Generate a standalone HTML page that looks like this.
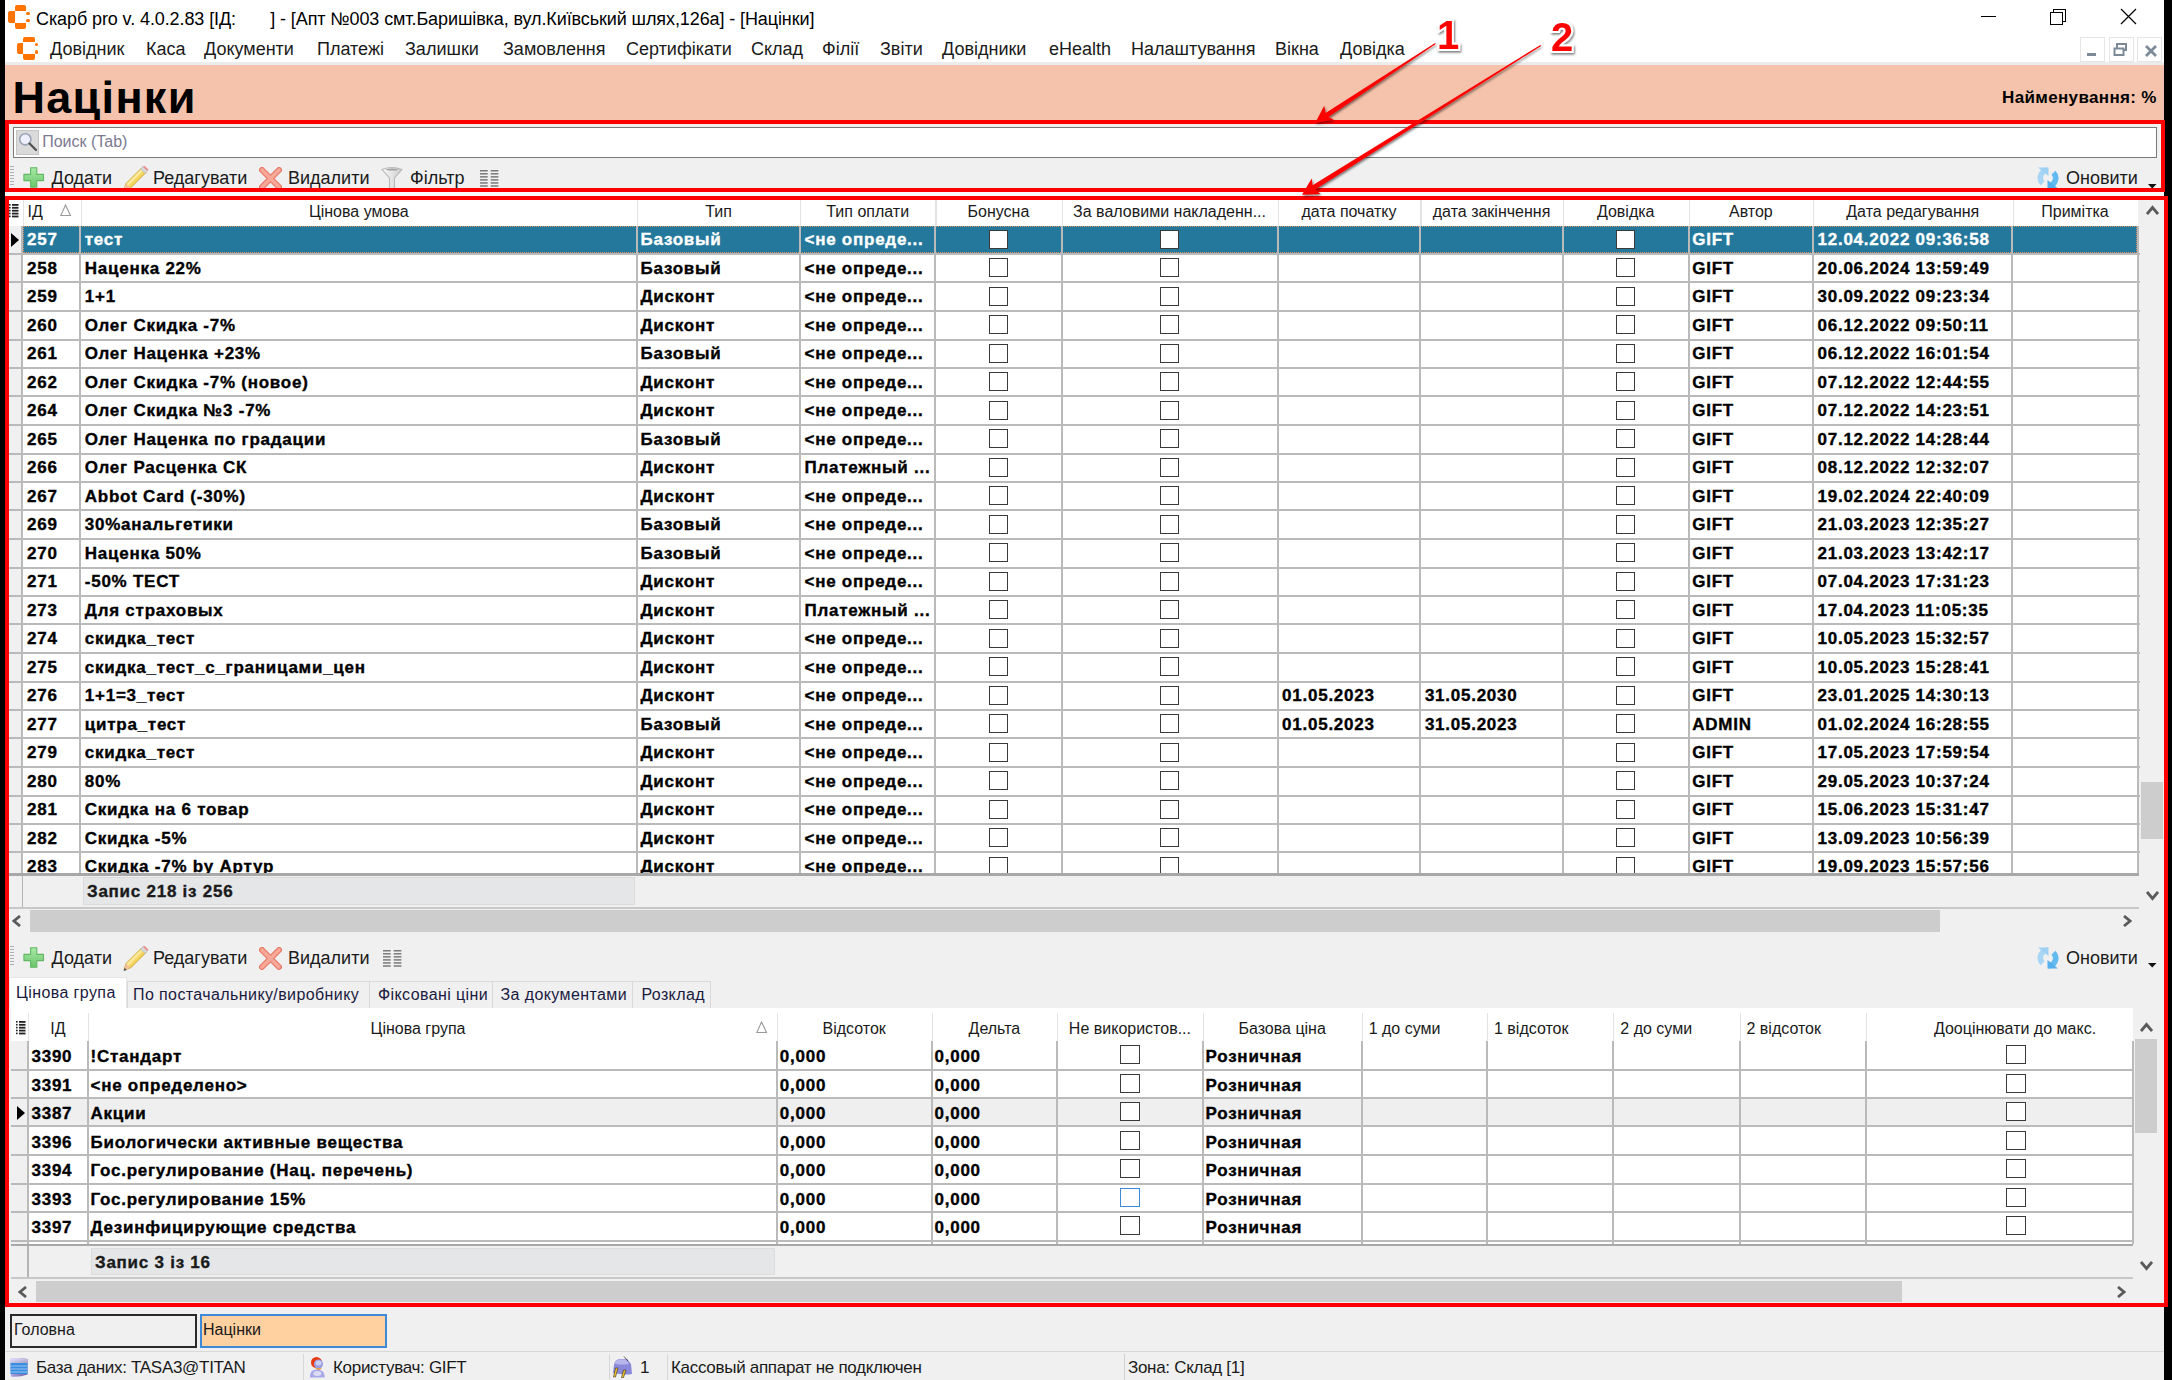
<!DOCTYPE html><html><head><meta charset="utf-8"><style>
html,body{margin:0;padding:0;width:2172px;height:1380px;overflow:hidden;background:#f0f0f0;}
body{position:relative;font-family:"Liberation Sans", sans-serif;}
.t{position:absolute;white-space:nowrap;}
</style></head><body>
<div style="position:absolute;left:0px;top:0px;width:2172px;height:62px;background:#fff"></div>
<div style="position:absolute;left:5px;top:62px;width:2159px;height:3px;background:#ececec"></div>
<div style="position:absolute;left:14.7px;top:5.1px;width:11.4px;height:5.7px;background:#ff7300;border-radius:2px 2px 0 0"></div>
<div style="position:absolute;left:8.4px;top:11.0px;width:6.2px;height:11.7px;background:#ff7300;border-radius:2px 0 0 2px"></div>
<div style="position:absolute;left:14.7px;top:22.9px;width:11.4px;height:5.8px;background:#ff7300;border-radius:0 0 2px 2px"></div>
<div style="position:absolute;left:26.200000000000003px;top:11.5px;width:3.4px;height:3.4px;background:#ff7300;border-radius:50%"></div>
<div style="position:absolute;left:26.200000000000003px;top:18.7px;width:3.4px;height:3.4px;background:#ff7300;border-radius:50%"></div>
<div class="t" style="left:36px;top:9.41px;font-size:18px;line-height:20.70px;height:20.70px;font-weight:normal;color:#000;letter-spacing:-0.1px">Скарб pro v. 4.0.2.83 [ІД:&nbsp;&nbsp;&nbsp;&nbsp;&nbsp;&nbsp;&nbsp;] - [Апт №003 смт.Баришівка, вул.Київський шлях,126а] - [Націнки]</div>
<div style="position:absolute;left:1981px;top:16px;width:15px;height:1.2px;background:#000"></div>
<div style="position:absolute;left:2053px;top:9px;width:11px;height:11px;border:1.2px solid #000;background:#fff"></div>
<div style="position:absolute;left:2050px;top:12px;width:11px;height:11px;border:1.2px solid #000;background:#fff"></div>
<svg style="position:absolute;left:2120px;top:8px" width="18" height="18"><path d="M1 1 L16 16 M16 1 L1 16" stroke="#000" stroke-width="1.2"/></svg>
<div style="position:absolute;left:23.2px;top:36.6px;width:11.4px;height:5.7px;background:#ff7300;border-radius:2px 2px 0 0"></div>
<div style="position:absolute;left:16.9px;top:42.5px;width:6.2px;height:11.7px;background:#ff7300;border-radius:2px 0 0 2px"></div>
<div style="position:absolute;left:23.2px;top:54.400000000000006px;width:11.4px;height:5.8px;background:#ff7300;border-radius:0 0 2px 2px"></div>
<div style="position:absolute;left:34.7px;top:43.0px;width:3.4px;height:3.4px;background:#ff7300;border-radius:50%"></div>
<div style="position:absolute;left:34.7px;top:50.2px;width:3.4px;height:3.4px;background:#ff7300;border-radius:50%"></div>
<div class="t" style="left:50px;top:39.41px;font-size:18px;line-height:20.70px;height:20.70px;font-weight:normal;color:#1a1a1a;">Довідник</div>
<div class="t" style="left:146px;top:39.41px;font-size:18px;line-height:20.70px;height:20.70px;font-weight:normal;color:#1a1a1a;">Каса</div>
<div class="t" style="left:204px;top:39.41px;font-size:18px;line-height:20.70px;height:20.70px;font-weight:normal;color:#1a1a1a;">Документи</div>
<div class="t" style="left:317px;top:39.41px;font-size:18px;line-height:20.70px;height:20.70px;font-weight:normal;color:#1a1a1a;">Платежі</div>
<div class="t" style="left:405px;top:39.41px;font-size:18px;line-height:20.70px;height:20.70px;font-weight:normal;color:#1a1a1a;">Залишки</div>
<div class="t" style="left:503px;top:39.41px;font-size:18px;line-height:20.70px;height:20.70px;font-weight:normal;color:#1a1a1a;">Замовлення</div>
<div class="t" style="left:626px;top:39.41px;font-size:18px;line-height:20.70px;height:20.70px;font-weight:normal;color:#1a1a1a;">Сертифікати</div>
<div class="t" style="left:751px;top:39.41px;font-size:18px;line-height:20.70px;height:20.70px;font-weight:normal;color:#1a1a1a;">Склад</div>
<div class="t" style="left:822px;top:39.41px;font-size:18px;line-height:20.70px;height:20.70px;font-weight:normal;color:#1a1a1a;">Філії</div>
<div class="t" style="left:880px;top:39.41px;font-size:18px;line-height:20.70px;height:20.70px;font-weight:normal;color:#1a1a1a;">Звіти</div>
<div class="t" style="left:942px;top:39.41px;font-size:18px;line-height:20.70px;height:20.70px;font-weight:normal;color:#1a1a1a;">Довідники</div>
<div class="t" style="left:1049px;top:39.41px;font-size:18px;line-height:20.70px;height:20.70px;font-weight:normal;color:#1a1a1a;">eHealth</div>
<div class="t" style="left:1131px;top:39.41px;font-size:18px;line-height:20.70px;height:20.70px;font-weight:normal;color:#1a1a1a;">Налаштування</div>
<div class="t" style="left:1275px;top:39.41px;font-size:18px;line-height:20.70px;height:20.70px;font-weight:normal;color:#1a1a1a;">Вікна</div>
<div class="t" style="left:1340px;top:39.41px;font-size:18px;line-height:20.70px;height:20.70px;font-weight:normal;color:#1a1a1a;">Довідка</div>
<div style="position:absolute;left:2080px;top:37px;width:25px;height:25px;border:1px solid #e6e6e6;box-sizing:border-box;background:#fff"></div>
<div style="position:absolute;left:2108.5px;top:37px;width:25px;height:25px;border:1px solid #e6e6e6;box-sizing:border-box;background:#fff"></div>
<div style="position:absolute;left:2137px;top:37px;width:25px;height:25px;border:1px solid #e6e6e6;box-sizing:border-box;background:#fff"></div>
<div style="position:absolute;left:2087px;top:52.5px;width:9px;height:3.5px;background:#7c8a98"></div>
<svg style="position:absolute;left:2113px;top:43px" width="16" height="14"><rect x="4" y="1" width="9" height="6" fill="none" stroke="#7c8a98" stroke-width="2"/><rect x="1.5" y="5.5" width="9" height="6.5" fill="#fff" stroke="#7c8a98" stroke-width="2"/></svg>
<svg style="position:absolute;left:2144px;top:44px" width="14" height="14"><path d="M2 2 L12 12 M12 2 L2 12" stroke="#7c8a98" stroke-width="2.8"/></svg>
<div style="position:absolute;left:5px;top:65px;width:2159px;height:55.5px;background:#f5c3ab"></div>
<div class="t" style="left:12.5px;top:71.53px;font-size:45px;line-height:51.75px;height:51.75px;font-weight:bold;color:#000;letter-spacing:1.3px">Націнки</div>
<div class="t" style="left:2002px;top:88.33px;font-size:17px;line-height:19.55px;height:19.55px;font-weight:bold;color:#000;letter-spacing:0.35px">Найменування: %</div>
<div style="position:absolute;left:5px;top:120px;width:2160px;height:72px;background:#f0f0f0"></div>
<div style="position:absolute;left:12.9px;top:127px;width:2144px;height:30.5px;background:#fff;border:1px solid #7a7a7a;box-sizing:border-box"></div>
<div style="position:absolute;left:15.8px;top:130px;width:23.2px;height:24.6px;background:#dadada;border:1px solid #c4c4c4;box-sizing:border-box"></div>
<svg style="position:absolute;left:16px;top:131px" width="24" height="24"><circle cx="9.3" cy="8.3" r="5.6" fill="#eef0ff" stroke="#9aa4b8" stroke-width="1.6"/><path d="M13.5 12.5 L20 19" stroke="#555" stroke-width="2.4" stroke-linecap="round"/></svg>
<div class="t" style="left:42.2px;top:132.76px;font-size:16px;line-height:18.40px;height:18.40px;font-weight:normal;color:#7a7a90;">Поиск (Tab)</div>
<div style="position:absolute;left:10px;top:166px;width:4px;height:1px;background:#b0b0b0"></div>
<div style="position:absolute;left:10px;top:169px;width:4px;height:1px;background:#b0b0b0"></div>
<div style="position:absolute;left:10px;top:172px;width:4px;height:1px;background:#b0b0b0"></div>
<div style="position:absolute;left:10px;top:175px;width:4px;height:1px;background:#b0b0b0"></div>
<div style="position:absolute;left:10px;top:178px;width:4px;height:1px;background:#b0b0b0"></div>
<div style="position:absolute;left:10px;top:181px;width:4px;height:1px;background:#b0b0b0"></div>
<div style="position:absolute;left:10px;top:184px;width:4px;height:1px;background:#b0b0b0"></div>
<svg style="position:absolute;left:22.8px;top:167.3px" width="22" height="22"><defs><linearGradient id="pg" x1="0" y1="0" x2="0" y2="1"><stop offset="0" stop-color="#a8eaa8"/><stop offset="1" stop-color="#6cc46c"/></linearGradient></defs><path d="M7.6 0.7 H13.8 V7.4 H20.5 V13.6 H13.8 V20.3 H7.6 V13.6 H0.9 V7.4 H7.6 Z" fill="url(#pg)" stroke="#62b862" stroke-width="1.1" stroke-linejoin="round"/></svg>
<div class="t" style="left:51.6px;top:168.41px;font-size:18px;line-height:20.70px;height:20.70px;font-weight:normal;color:#1a1a1a;">Додати</div>
<svg style="position:absolute;left:122.5px;top:165.5px" width="26" height="26"><path d="M1 24 L3 17.5 L18.5 2 L23 6.5 L7.5 22 Z" fill="#f4d45a" stroke="#c8a030" stroke-width="0.9"/><path d="M3.2 18 L18.2 3 L20.2 5 L5.2 20 Z" fill="#fbe89a"/><path d="M17.5 3 L20 0.6 L24.4 5 L22 7.5 Z" fill="#d8d8d8" stroke="#b0b0b0" stroke-width="0.6"/><path d="M20 0.6 L21.3 -0.5 L25.5 3.7 L24.4 5 Z" fill="#f08a8a"/><path d="M1 24 L3 17.5 L7.5 22 Z" fill="#f2c09a"/><path d="M0.6 25 L1.6 21.8 L3.8 24 Z" fill="#555"/></svg>
<div class="t" style="left:153px;top:168.41px;font-size:18px;line-height:20.70px;height:20.70px;font-weight:normal;color:#1a1a1a;">Редагувати</div>
<svg style="position:absolute;left:259px;top:167px" width="23" height="23"><path d="M3 3 L20 20 M20 3 L3 20" stroke="#e87a68" stroke-width="6" stroke-linecap="round"/><path d="M3 3 L20 20 M20 3 L3 20" stroke="#f7a898" stroke-width="3.6" stroke-linecap="round"/></svg>
<div class="t" style="left:288px;top:168.41px;font-size:18px;line-height:20.70px;height:20.70px;font-weight:normal;color:#1a1a1a;">Видалити</div>
<svg style="position:absolute;left:381.3px;top:165.8px" width="22" height="24"><defs><linearGradient id="fg" x1="0" y1="0" x2="1" y2="0"><stop offset="0" stop-color="#f8f8f8"/><stop offset="0.5" stop-color="#e4e4e4"/><stop offset="1" stop-color="#c8c8c8"/></linearGradient></defs><path d="M1 3.5 Q11 -0.5 21 3.5 L13.5 12 V23 H8.5 V12 Z" fill="url(#fg)" stroke="#b8b8b8" stroke-width="1.1"/><ellipse cx="11" cy="3.6" rx="6" ry="1" fill="#a0a0a0"/></svg>
<div class="t" style="left:410px;top:168.41px;font-size:18px;line-height:20.70px;height:20.70px;font-weight:normal;color:#1a1a1a;">Фільтр</div>
<svg style="position:absolute;left:480.3px;top:170px" width="19" height="18"><rect x="0" y="0.0" width="7.7" height="1.5" fill="#7a7a7a"/><rect x="0" y="3.05" width="7.7" height="1.5" fill="#7a7a7a"/><rect x="0" y="6.1" width="7.7" height="1.5" fill="#7a7a7a"/><rect x="0" y="9.149999999999999" width="7.7" height="1.5" fill="#7a7a7a"/><rect x="0" y="12.2" width="7.7" height="1.5" fill="#7a7a7a"/><rect x="0" y="15.25" width="7.7" height="1.5" fill="#7a7a7a"/><rect x="10.7" y="0.0" width="7.7" height="1.5" fill="#7a7a7a"/><rect x="10.7" y="3.05" width="7.7" height="1.5" fill="#7a7a7a"/><rect x="10.7" y="6.1" width="7.7" height="1.5" fill="#7a7a7a"/><rect x="10.7" y="9.149999999999999" width="7.7" height="1.5" fill="#7a7a7a"/><rect x="10.7" y="12.2" width="7.7" height="1.5" fill="#7a7a7a"/><rect x="10.7" y="15.25" width="7.7" height="1.5" fill="#7a7a7a"/></svg>
<svg style="position:absolute;left:2037px;top:167px" width="23" height="23"><path d="M11 3.2 A7.6 7.6 0 0 0 5.6 16.2" fill="none" stroke="#a9d6f5" stroke-width="5.6"/><path d="M1 0.5 H11.5 V9 Z" fill="#9fd0f3"/><path d="M11 18.8 A7.6 7.6 0 0 0 16.4 5.8" fill="none" stroke="#62baf0" stroke-width="5.6"/><path d="M21 21.5 H10.5 V13 Z" fill="#55b0ec"/></svg>
<div class="t" style="left:2066px;top:168.41px;font-size:18px;line-height:20.70px;height:20.70px;font-weight:normal;color:#1a1a1a;">Оновити</div>
<svg style="position:absolute;left:2148px;top:183.5px" width="10" height="6"><path d="M0 0 H8.5 L4.25 4.5 Z" fill="#111"/></svg>
<div style="position:absolute;left:5px;top:120px;width:2160px;height:72px;border:4px solid #ff0000;box-sizing:border-box"></div>
<div style="position:absolute;left:5px;top:192px;width:2159px;height:4px;background:#fafafa"></div>
<div style="position:absolute;left:9px;top:200px;width:2155px;height:1106px;background:#f0f0f0"></div>
<div style="position:absolute;left:9px;top:200px;width:2128.5px;height:25.5px;background:#fff"></div>
<div style="position:absolute;left:22.5px;top:225.5px;width:2115.0px;height:647.5px;background:#fff"></div>
<div style="position:absolute;left:9px;top:225.5px;width:13.5px;height:647.5px;background:#f0f0f0"></div>
<div style="position:absolute;left:22.5px;top:225.5px;width:2115.0px;height:28.5px;background:#24789c"></div>
<div style="position:absolute;left:22.5px;top:225.5px;width:2114.0px;height:27.5px;border:1px dotted #d89060;box-sizing:border-box"></div>
<div style="position:absolute;left:22.5px;top:200px;width:1.2px;height:25.5px;background:#e3e3e3"></div>
<div style="position:absolute;left:80.5px;top:200px;width:1.2px;height:25.5px;background:#e3e3e3"></div>
<div style="position:absolute;left:637px;top:200px;width:1.2px;height:25.5px;background:#e3e3e3"></div>
<div style="position:absolute;left:800px;top:200px;width:1.2px;height:25.5px;background:#e3e3e3"></div>
<div style="position:absolute;left:935.4px;top:200px;width:1.2px;height:25.5px;background:#e3e3e3"></div>
<div style="position:absolute;left:1061.5px;top:200px;width:1.2px;height:25.5px;background:#e3e3e3"></div>
<div style="position:absolute;left:1277.6px;top:200px;width:1.2px;height:25.5px;background:#e3e3e3"></div>
<div style="position:absolute;left:1420.4px;top:200px;width:1.2px;height:25.5px;background:#e3e3e3"></div>
<div style="position:absolute;left:1562.7px;top:200px;width:1.2px;height:25.5px;background:#e3e3e3"></div>
<div style="position:absolute;left:1688.7px;top:200px;width:1.2px;height:25.5px;background:#e3e3e3"></div>
<div style="position:absolute;left:1813px;top:200px;width:1.2px;height:25.5px;background:#e3e3e3"></div>
<div style="position:absolute;left:2012.5px;top:200px;width:1.2px;height:25.5px;background:#e3e3e3"></div>
<div class="t" style="left:27.6px;top:202.96px;font-size:16px;line-height:18.40px;height:18.40px;font-weight:normal;color:#1a1a1a;">ІД</div>
<div class="t" style="left:-41.25px;width:800px;text-align:center;top:202.96px;font-size:16px;line-height:18.40px;font-weight:normal;color:#1a1a1a;">Цінова умова</div>
<div class="t" style="left:318.5px;width:800px;text-align:center;top:202.96px;font-size:16px;line-height:18.40px;font-weight:normal;color:#1a1a1a;">Тип</div>
<div class="t" style="left:467.70000000000005px;width:800px;text-align:center;top:202.96px;font-size:16px;line-height:18.40px;font-weight:normal;color:#1a1a1a;">Тип оплати</div>
<div class="t" style="left:598.45px;width:800px;text-align:center;top:202.96px;font-size:16px;line-height:18.40px;font-weight:normal;color:#1a1a1a;">Бонусна</div>
<div class="t" style="left:769.55px;width:800px;text-align:center;top:202.96px;font-size:16px;line-height:18.40px;font-weight:normal;color:#1a1a1a;">За валовими накладенн...</div>
<div class="t" style="left:949.0px;width:800px;text-align:center;top:202.96px;font-size:16px;line-height:18.40px;font-weight:normal;color:#1a1a1a;">дата початку</div>
<div class="t" style="left:1091.5500000000002px;width:800px;text-align:center;top:202.96px;font-size:16px;line-height:18.40px;font-weight:normal;color:#1a1a1a;">дата закінчення</div>
<div class="t" style="left:1225.7px;width:800px;text-align:center;top:202.96px;font-size:16px;line-height:18.40px;font-weight:normal;color:#1a1a1a;">Довідка</div>
<div class="t" style="left:1350.85px;width:800px;text-align:center;top:202.96px;font-size:16px;line-height:18.40px;font-weight:normal;color:#1a1a1a;">Автор</div>
<div class="t" style="left:1512.75px;width:800px;text-align:center;top:202.96px;font-size:16px;line-height:18.40px;font-weight:normal;color:#1a1a1a;">Дата редагування</div>
<div class="t" style="left:1675.0px;width:800px;text-align:center;top:202.96px;font-size:16px;line-height:18.40px;font-weight:normal;color:#1a1a1a;">Примітка</div>
<svg style="position:absolute;left:9.3px;top:204.3px" width="10" height="15"><rect x="0" y="0.0" width="1.6" height="1.6" fill="#222"/><rect x="3" y="0.0" width="6.5" height="1.8" fill="#222"/><rect x="0" y="2.9" width="1.6" height="1.6" fill="#222"/><rect x="3" y="2.9" width="6.5" height="1.8" fill="#222"/><rect x="0" y="5.8" width="1.6" height="1.6" fill="#222"/><rect x="3" y="5.8" width="6.5" height="1.8" fill="#222"/><rect x="0" y="8.7" width="1.6" height="1.6" fill="#222"/><rect x="3" y="8.7" width="6.5" height="1.8" fill="#222"/><rect x="0" y="11.6" width="1.6" height="1.6" fill="#222"/><rect x="3" y="11.6" width="6.5" height="1.8" fill="#222"/></svg>
<svg style="position:absolute;left:60px;top:204px" width="12" height="13"><path d="M5.5 1 L10.5 11.5 H0.8 Z" fill="#fff" stroke="#999" stroke-width="1.1"/></svg>
<div style="position:absolute;left:0;top:0;width:2172px;height:873px;overflow:hidden">
<div class="t" style="left:27.0px;top:230.33px;font-size:17px;line-height:19.55px;height:19.55px;font-weight:bold;color:#fff;letter-spacing:0.75px;-webkit-text-stroke:0.35px currentColor">257</div>
<div class="t" style="left:84.8px;top:230.33px;font-size:17px;line-height:19.55px;height:19.55px;font-weight:bold;color:#fff;letter-spacing:0.75px;-webkit-text-stroke:0.35px currentColor">тест</div>
<div class="t" style="left:640.5px;top:230.33px;font-size:17px;line-height:19.55px;height:19.55px;font-weight:bold;color:#fff;letter-spacing:0.75px;-webkit-text-stroke:0.35px currentColor">Базовый</div>
<div class="t" style="left:804.5px;top:230.33px;font-size:17px;line-height:19.55px;height:19.55px;font-weight:bold;color:#fff;letter-spacing:0.75px;-webkit-text-stroke:0.35px currentColor">&lt;не опреде...</div>
<div style="position:absolute;left:988.85px;top:229.79999999999998px;width:19.2px;height:19.2px;border:1.8px solid #3a3a3a;box-sizing:border-box;background:#fff"></div>
<div style="position:absolute;left:1159.95px;top:229.79999999999998px;width:19.2px;height:19.2px;border:1.8px solid #3a3a3a;box-sizing:border-box;background:#fff"></div>
<div style="position:absolute;left:1616.1000000000001px;top:229.79999999999998px;width:19.2px;height:19.2px;border:1.8px solid #3a3a3a;box-sizing:border-box;background:#fff"></div>
<div class="t" style="left:1692.2px;top:230.33px;font-size:17px;line-height:19.55px;height:19.55px;font-weight:bold;color:#fff;letter-spacing:0.75px;-webkit-text-stroke:0.35px currentColor">GIFT</div>
<div class="t" style="left:1817.5px;top:230.33px;font-size:17px;line-height:19.55px;height:19.55px;font-weight:bold;color:#fff;letter-spacing:0.75px;-webkit-text-stroke:0.35px currentColor">12.04.2022 09:36:58</div>
<div class="t" style="left:27.0px;top:258.83px;font-size:17px;line-height:19.55px;height:19.55px;font-weight:bold;color:#000;letter-spacing:0.75px;-webkit-text-stroke:0.35px currentColor">258</div>
<div class="t" style="left:84.8px;top:258.83px;font-size:17px;line-height:19.55px;height:19.55px;font-weight:bold;color:#000;letter-spacing:0.75px;-webkit-text-stroke:0.35px currentColor">Наценка 22%</div>
<div class="t" style="left:640.5px;top:258.83px;font-size:17px;line-height:19.55px;height:19.55px;font-weight:bold;color:#000;letter-spacing:0.75px;-webkit-text-stroke:0.35px currentColor">Базовый</div>
<div class="t" style="left:804.5px;top:258.83px;font-size:17px;line-height:19.55px;height:19.55px;font-weight:bold;color:#000;letter-spacing:0.75px;-webkit-text-stroke:0.35px currentColor">&lt;не опреде...</div>
<div style="position:absolute;left:988.85px;top:258.3px;width:19.2px;height:19.2px;border:1.8px solid #3a3a3a;box-sizing:border-box;background:#fff"></div>
<div style="position:absolute;left:1159.95px;top:258.3px;width:19.2px;height:19.2px;border:1.8px solid #3a3a3a;box-sizing:border-box;background:#fff"></div>
<div style="position:absolute;left:1616.1000000000001px;top:258.3px;width:19.2px;height:19.2px;border:1.8px solid #3a3a3a;box-sizing:border-box;background:#fff"></div>
<div class="t" style="left:1692.2px;top:258.83px;font-size:17px;line-height:19.55px;height:19.55px;font-weight:bold;color:#000;letter-spacing:0.75px;-webkit-text-stroke:0.35px currentColor">GIFT</div>
<div class="t" style="left:1817.5px;top:258.83px;font-size:17px;line-height:19.55px;height:19.55px;font-weight:bold;color:#000;letter-spacing:0.75px;-webkit-text-stroke:0.35px currentColor">20.06.2024 13:59:49</div>
<div style="position:absolute;left:9px;top:253px;width:2130.5px;height:2px;background:#bababa"></div>
<div class="t" style="left:27.0px;top:287.33px;font-size:17px;line-height:19.55px;height:19.55px;font-weight:bold;color:#000;letter-spacing:0.75px;-webkit-text-stroke:0.35px currentColor">259</div>
<div class="t" style="left:84.8px;top:287.33px;font-size:17px;line-height:19.55px;height:19.55px;font-weight:bold;color:#000;letter-spacing:0.75px;-webkit-text-stroke:0.35px currentColor">1+1</div>
<div class="t" style="left:640.5px;top:287.33px;font-size:17px;line-height:19.55px;height:19.55px;font-weight:bold;color:#000;letter-spacing:0.75px;-webkit-text-stroke:0.35px currentColor">Дисконт</div>
<div class="t" style="left:804.5px;top:287.33px;font-size:17px;line-height:19.55px;height:19.55px;font-weight:bold;color:#000;letter-spacing:0.75px;-webkit-text-stroke:0.35px currentColor">&lt;не опреде...</div>
<div style="position:absolute;left:988.85px;top:286.8px;width:19.2px;height:19.2px;border:1.8px solid #3a3a3a;box-sizing:border-box;background:#fff"></div>
<div style="position:absolute;left:1159.95px;top:286.8px;width:19.2px;height:19.2px;border:1.8px solid #3a3a3a;box-sizing:border-box;background:#fff"></div>
<div style="position:absolute;left:1616.1000000000001px;top:286.8px;width:19.2px;height:19.2px;border:1.8px solid #3a3a3a;box-sizing:border-box;background:#fff"></div>
<div class="t" style="left:1692.2px;top:287.33px;font-size:17px;line-height:19.55px;height:19.55px;font-weight:bold;color:#000;letter-spacing:0.75px;-webkit-text-stroke:0.35px currentColor">GIFT</div>
<div class="t" style="left:1817.5px;top:287.33px;font-size:17px;line-height:19.55px;height:19.55px;font-weight:bold;color:#000;letter-spacing:0.75px;-webkit-text-stroke:0.35px currentColor">30.09.2022 09:23:34</div>
<div style="position:absolute;left:9px;top:281px;width:2130.5px;height:2px;background:#bababa"></div>
<div class="t" style="left:27.0px;top:315.83px;font-size:17px;line-height:19.55px;height:19.55px;font-weight:bold;color:#000;letter-spacing:0.75px;-webkit-text-stroke:0.35px currentColor">260</div>
<div class="t" style="left:84.8px;top:315.83px;font-size:17px;line-height:19.55px;height:19.55px;font-weight:bold;color:#000;letter-spacing:0.75px;-webkit-text-stroke:0.35px currentColor">Олег Скидка -7%</div>
<div class="t" style="left:640.5px;top:315.83px;font-size:17px;line-height:19.55px;height:19.55px;font-weight:bold;color:#000;letter-spacing:0.75px;-webkit-text-stroke:0.35px currentColor">Дисконт</div>
<div class="t" style="left:804.5px;top:315.83px;font-size:17px;line-height:19.55px;height:19.55px;font-weight:bold;color:#000;letter-spacing:0.75px;-webkit-text-stroke:0.35px currentColor">&lt;не опреде...</div>
<div style="position:absolute;left:988.85px;top:315.3px;width:19.2px;height:19.2px;border:1.8px solid #3a3a3a;box-sizing:border-box;background:#fff"></div>
<div style="position:absolute;left:1159.95px;top:315.3px;width:19.2px;height:19.2px;border:1.8px solid #3a3a3a;box-sizing:border-box;background:#fff"></div>
<div style="position:absolute;left:1616.1000000000001px;top:315.3px;width:19.2px;height:19.2px;border:1.8px solid #3a3a3a;box-sizing:border-box;background:#fff"></div>
<div class="t" style="left:1692.2px;top:315.83px;font-size:17px;line-height:19.55px;height:19.55px;font-weight:bold;color:#000;letter-spacing:0.75px;-webkit-text-stroke:0.35px currentColor">GIFT</div>
<div class="t" style="left:1817.5px;top:315.83px;font-size:17px;line-height:19.55px;height:19.55px;font-weight:bold;color:#000;letter-spacing:0.75px;-webkit-text-stroke:0.35px currentColor">06.12.2022 09:50:11</div>
<div style="position:absolute;left:9px;top:310px;width:2130.5px;height:2px;background:#bababa"></div>
<div class="t" style="left:27.0px;top:344.33px;font-size:17px;line-height:19.55px;height:19.55px;font-weight:bold;color:#000;letter-spacing:0.75px;-webkit-text-stroke:0.35px currentColor">261</div>
<div class="t" style="left:84.8px;top:344.33px;font-size:17px;line-height:19.55px;height:19.55px;font-weight:bold;color:#000;letter-spacing:0.75px;-webkit-text-stroke:0.35px currentColor">Олег Наценка +23%</div>
<div class="t" style="left:640.5px;top:344.33px;font-size:17px;line-height:19.55px;height:19.55px;font-weight:bold;color:#000;letter-spacing:0.75px;-webkit-text-stroke:0.35px currentColor">Базовый</div>
<div class="t" style="left:804.5px;top:344.33px;font-size:17px;line-height:19.55px;height:19.55px;font-weight:bold;color:#000;letter-spacing:0.75px;-webkit-text-stroke:0.35px currentColor">&lt;не опреде...</div>
<div style="position:absolute;left:988.85px;top:343.8px;width:19.2px;height:19.2px;border:1.8px solid #3a3a3a;box-sizing:border-box;background:#fff"></div>
<div style="position:absolute;left:1159.95px;top:343.8px;width:19.2px;height:19.2px;border:1.8px solid #3a3a3a;box-sizing:border-box;background:#fff"></div>
<div style="position:absolute;left:1616.1000000000001px;top:343.8px;width:19.2px;height:19.2px;border:1.8px solid #3a3a3a;box-sizing:border-box;background:#fff"></div>
<div class="t" style="left:1692.2px;top:344.33px;font-size:17px;line-height:19.55px;height:19.55px;font-weight:bold;color:#000;letter-spacing:0.75px;-webkit-text-stroke:0.35px currentColor">GIFT</div>
<div class="t" style="left:1817.5px;top:344.33px;font-size:17px;line-height:19.55px;height:19.55px;font-weight:bold;color:#000;letter-spacing:0.75px;-webkit-text-stroke:0.35px currentColor">06.12.2022 16:01:54</div>
<div style="position:absolute;left:9px;top:339px;width:2130.5px;height:2px;background:#bababa"></div>
<div class="t" style="left:27.0px;top:372.83px;font-size:17px;line-height:19.55px;height:19.55px;font-weight:bold;color:#000;letter-spacing:0.75px;-webkit-text-stroke:0.35px currentColor">262</div>
<div class="t" style="left:84.8px;top:372.83px;font-size:17px;line-height:19.55px;height:19.55px;font-weight:bold;color:#000;letter-spacing:0.75px;-webkit-text-stroke:0.35px currentColor">Олег Скидка -7% (новое)</div>
<div class="t" style="left:640.5px;top:372.83px;font-size:17px;line-height:19.55px;height:19.55px;font-weight:bold;color:#000;letter-spacing:0.75px;-webkit-text-stroke:0.35px currentColor">Дисконт</div>
<div class="t" style="left:804.5px;top:372.83px;font-size:17px;line-height:19.55px;height:19.55px;font-weight:bold;color:#000;letter-spacing:0.75px;-webkit-text-stroke:0.35px currentColor">&lt;не опреде...</div>
<div style="position:absolute;left:988.85px;top:372.3px;width:19.2px;height:19.2px;border:1.8px solid #3a3a3a;box-sizing:border-box;background:#fff"></div>
<div style="position:absolute;left:1159.95px;top:372.3px;width:19.2px;height:19.2px;border:1.8px solid #3a3a3a;box-sizing:border-box;background:#fff"></div>
<div style="position:absolute;left:1616.1000000000001px;top:372.3px;width:19.2px;height:19.2px;border:1.8px solid #3a3a3a;box-sizing:border-box;background:#fff"></div>
<div class="t" style="left:1692.2px;top:372.83px;font-size:17px;line-height:19.55px;height:19.55px;font-weight:bold;color:#000;letter-spacing:0.75px;-webkit-text-stroke:0.35px currentColor">GIFT</div>
<div class="t" style="left:1817.5px;top:372.83px;font-size:17px;line-height:19.55px;height:19.55px;font-weight:bold;color:#000;letter-spacing:0.75px;-webkit-text-stroke:0.35px currentColor">07.12.2022 12:44:55</div>
<div style="position:absolute;left:9px;top:367px;width:2130.5px;height:2px;background:#bababa"></div>
<div class="t" style="left:27.0px;top:401.33px;font-size:17px;line-height:19.55px;height:19.55px;font-weight:bold;color:#000;letter-spacing:0.75px;-webkit-text-stroke:0.35px currentColor">264</div>
<div class="t" style="left:84.8px;top:401.33px;font-size:17px;line-height:19.55px;height:19.55px;font-weight:bold;color:#000;letter-spacing:0.75px;-webkit-text-stroke:0.35px currentColor">Олег Скидка №3 -7%</div>
<div class="t" style="left:640.5px;top:401.33px;font-size:17px;line-height:19.55px;height:19.55px;font-weight:bold;color:#000;letter-spacing:0.75px;-webkit-text-stroke:0.35px currentColor">Дисконт</div>
<div class="t" style="left:804.5px;top:401.33px;font-size:17px;line-height:19.55px;height:19.55px;font-weight:bold;color:#000;letter-spacing:0.75px;-webkit-text-stroke:0.35px currentColor">&lt;не опреде...</div>
<div style="position:absolute;left:988.85px;top:400.8px;width:19.2px;height:19.2px;border:1.8px solid #3a3a3a;box-sizing:border-box;background:#fff"></div>
<div style="position:absolute;left:1159.95px;top:400.8px;width:19.2px;height:19.2px;border:1.8px solid #3a3a3a;box-sizing:border-box;background:#fff"></div>
<div style="position:absolute;left:1616.1000000000001px;top:400.8px;width:19.2px;height:19.2px;border:1.8px solid #3a3a3a;box-sizing:border-box;background:#fff"></div>
<div class="t" style="left:1692.2px;top:401.33px;font-size:17px;line-height:19.55px;height:19.55px;font-weight:bold;color:#000;letter-spacing:0.75px;-webkit-text-stroke:0.35px currentColor">GIFT</div>
<div class="t" style="left:1817.5px;top:401.33px;font-size:17px;line-height:19.55px;height:19.55px;font-weight:bold;color:#000;letter-spacing:0.75px;-webkit-text-stroke:0.35px currentColor">07.12.2022 14:23:51</div>
<div style="position:absolute;left:9px;top:395px;width:2130.5px;height:2px;background:#bababa"></div>
<div class="t" style="left:27.0px;top:429.83px;font-size:17px;line-height:19.55px;height:19.55px;font-weight:bold;color:#000;letter-spacing:0.75px;-webkit-text-stroke:0.35px currentColor">265</div>
<div class="t" style="left:84.8px;top:429.83px;font-size:17px;line-height:19.55px;height:19.55px;font-weight:bold;color:#000;letter-spacing:0.75px;-webkit-text-stroke:0.35px currentColor">Олег Наценка по градации</div>
<div class="t" style="left:640.5px;top:429.83px;font-size:17px;line-height:19.55px;height:19.55px;font-weight:bold;color:#000;letter-spacing:0.75px;-webkit-text-stroke:0.35px currentColor">Базовый</div>
<div class="t" style="left:804.5px;top:429.83px;font-size:17px;line-height:19.55px;height:19.55px;font-weight:bold;color:#000;letter-spacing:0.75px;-webkit-text-stroke:0.35px currentColor">&lt;не опреде...</div>
<div style="position:absolute;left:988.85px;top:429.3px;width:19.2px;height:19.2px;border:1.8px solid #3a3a3a;box-sizing:border-box;background:#fff"></div>
<div style="position:absolute;left:1159.95px;top:429.3px;width:19.2px;height:19.2px;border:1.8px solid #3a3a3a;box-sizing:border-box;background:#fff"></div>
<div style="position:absolute;left:1616.1000000000001px;top:429.3px;width:19.2px;height:19.2px;border:1.8px solid #3a3a3a;box-sizing:border-box;background:#fff"></div>
<div class="t" style="left:1692.2px;top:429.83px;font-size:17px;line-height:19.55px;height:19.55px;font-weight:bold;color:#000;letter-spacing:0.75px;-webkit-text-stroke:0.35px currentColor">GIFT</div>
<div class="t" style="left:1817.5px;top:429.83px;font-size:17px;line-height:19.55px;height:19.55px;font-weight:bold;color:#000;letter-spacing:0.75px;-webkit-text-stroke:0.35px currentColor">07.12.2022 14:28:44</div>
<div style="position:absolute;left:9px;top:424px;width:2130.5px;height:2px;background:#bababa"></div>
<div class="t" style="left:27.0px;top:458.33px;font-size:17px;line-height:19.55px;height:19.55px;font-weight:bold;color:#000;letter-spacing:0.75px;-webkit-text-stroke:0.35px currentColor">266</div>
<div class="t" style="left:84.8px;top:458.33px;font-size:17px;line-height:19.55px;height:19.55px;font-weight:bold;color:#000;letter-spacing:0.75px;-webkit-text-stroke:0.35px currentColor">Олег Расценка СК</div>
<div class="t" style="left:640.5px;top:458.33px;font-size:17px;line-height:19.55px;height:19.55px;font-weight:bold;color:#000;letter-spacing:0.75px;-webkit-text-stroke:0.35px currentColor">Дисконт</div>
<div class="t" style="left:804.5px;top:458.33px;font-size:17px;line-height:19.55px;height:19.55px;font-weight:bold;color:#000;letter-spacing:0.75px;-webkit-text-stroke:0.35px currentColor">Платежный ...</div>
<div style="position:absolute;left:988.85px;top:457.8px;width:19.2px;height:19.2px;border:1.8px solid #3a3a3a;box-sizing:border-box;background:#fff"></div>
<div style="position:absolute;left:1159.95px;top:457.8px;width:19.2px;height:19.2px;border:1.8px solid #3a3a3a;box-sizing:border-box;background:#fff"></div>
<div style="position:absolute;left:1616.1000000000001px;top:457.8px;width:19.2px;height:19.2px;border:1.8px solid #3a3a3a;box-sizing:border-box;background:#fff"></div>
<div class="t" style="left:1692.2px;top:458.33px;font-size:17px;line-height:19.55px;height:19.55px;font-weight:bold;color:#000;letter-spacing:0.75px;-webkit-text-stroke:0.35px currentColor">GIFT</div>
<div class="t" style="left:1817.5px;top:458.33px;font-size:17px;line-height:19.55px;height:19.55px;font-weight:bold;color:#000;letter-spacing:0.75px;-webkit-text-stroke:0.35px currentColor">08.12.2022 12:32:07</div>
<div style="position:absolute;left:9px;top:453px;width:2130.5px;height:2px;background:#bababa"></div>
<div class="t" style="left:27.0px;top:486.83px;font-size:17px;line-height:19.55px;height:19.55px;font-weight:bold;color:#000;letter-spacing:0.75px;-webkit-text-stroke:0.35px currentColor">267</div>
<div class="t" style="left:84.8px;top:486.83px;font-size:17px;line-height:19.55px;height:19.55px;font-weight:bold;color:#000;letter-spacing:0.75px;-webkit-text-stroke:0.35px currentColor">Abbot Card (-30%)</div>
<div class="t" style="left:640.5px;top:486.83px;font-size:17px;line-height:19.55px;height:19.55px;font-weight:bold;color:#000;letter-spacing:0.75px;-webkit-text-stroke:0.35px currentColor">Дисконт</div>
<div class="t" style="left:804.5px;top:486.83px;font-size:17px;line-height:19.55px;height:19.55px;font-weight:bold;color:#000;letter-spacing:0.75px;-webkit-text-stroke:0.35px currentColor">&lt;не опреде...</div>
<div style="position:absolute;left:988.85px;top:486.3px;width:19.2px;height:19.2px;border:1.8px solid #3a3a3a;box-sizing:border-box;background:#fff"></div>
<div style="position:absolute;left:1159.95px;top:486.3px;width:19.2px;height:19.2px;border:1.8px solid #3a3a3a;box-sizing:border-box;background:#fff"></div>
<div style="position:absolute;left:1616.1000000000001px;top:486.3px;width:19.2px;height:19.2px;border:1.8px solid #3a3a3a;box-sizing:border-box;background:#fff"></div>
<div class="t" style="left:1692.2px;top:486.83px;font-size:17px;line-height:19.55px;height:19.55px;font-weight:bold;color:#000;letter-spacing:0.75px;-webkit-text-stroke:0.35px currentColor">GIFT</div>
<div class="t" style="left:1817.5px;top:486.83px;font-size:17px;line-height:19.55px;height:19.55px;font-weight:bold;color:#000;letter-spacing:0.75px;-webkit-text-stroke:0.35px currentColor">19.02.2024 22:40:09</div>
<div style="position:absolute;left:9px;top:481px;width:2130.5px;height:2px;background:#bababa"></div>
<div class="t" style="left:27.0px;top:515.33px;font-size:17px;line-height:19.55px;height:19.55px;font-weight:bold;color:#000;letter-spacing:0.75px;-webkit-text-stroke:0.35px currentColor">269</div>
<div class="t" style="left:84.8px;top:515.33px;font-size:17px;line-height:19.55px;height:19.55px;font-weight:bold;color:#000;letter-spacing:0.75px;-webkit-text-stroke:0.35px currentColor">30%анальгетики</div>
<div class="t" style="left:640.5px;top:515.33px;font-size:17px;line-height:19.55px;height:19.55px;font-weight:bold;color:#000;letter-spacing:0.75px;-webkit-text-stroke:0.35px currentColor">Базовый</div>
<div class="t" style="left:804.5px;top:515.33px;font-size:17px;line-height:19.55px;height:19.55px;font-weight:bold;color:#000;letter-spacing:0.75px;-webkit-text-stroke:0.35px currentColor">&lt;не опреде...</div>
<div style="position:absolute;left:988.85px;top:514.8000000000001px;width:19.2px;height:19.2px;border:1.8px solid #3a3a3a;box-sizing:border-box;background:#fff"></div>
<div style="position:absolute;left:1159.95px;top:514.8000000000001px;width:19.2px;height:19.2px;border:1.8px solid #3a3a3a;box-sizing:border-box;background:#fff"></div>
<div style="position:absolute;left:1616.1000000000001px;top:514.8000000000001px;width:19.2px;height:19.2px;border:1.8px solid #3a3a3a;box-sizing:border-box;background:#fff"></div>
<div class="t" style="left:1692.2px;top:515.33px;font-size:17px;line-height:19.55px;height:19.55px;font-weight:bold;color:#000;letter-spacing:0.75px;-webkit-text-stroke:0.35px currentColor">GIFT</div>
<div class="t" style="left:1817.5px;top:515.33px;font-size:17px;line-height:19.55px;height:19.55px;font-weight:bold;color:#000;letter-spacing:0.75px;-webkit-text-stroke:0.35px currentColor">21.03.2023 12:35:27</div>
<div style="position:absolute;left:9px;top:509px;width:2130.5px;height:2px;background:#bababa"></div>
<div class="t" style="left:27.0px;top:543.83px;font-size:17px;line-height:19.55px;height:19.55px;font-weight:bold;color:#000;letter-spacing:0.75px;-webkit-text-stroke:0.35px currentColor">270</div>
<div class="t" style="left:84.8px;top:543.83px;font-size:17px;line-height:19.55px;height:19.55px;font-weight:bold;color:#000;letter-spacing:0.75px;-webkit-text-stroke:0.35px currentColor">Наценка 50%</div>
<div class="t" style="left:640.5px;top:543.83px;font-size:17px;line-height:19.55px;height:19.55px;font-weight:bold;color:#000;letter-spacing:0.75px;-webkit-text-stroke:0.35px currentColor">Базовый</div>
<div class="t" style="left:804.5px;top:543.83px;font-size:17px;line-height:19.55px;height:19.55px;font-weight:bold;color:#000;letter-spacing:0.75px;-webkit-text-stroke:0.35px currentColor">&lt;не опреде...</div>
<div style="position:absolute;left:988.85px;top:543.3000000000001px;width:19.2px;height:19.2px;border:1.8px solid #3a3a3a;box-sizing:border-box;background:#fff"></div>
<div style="position:absolute;left:1159.95px;top:543.3000000000001px;width:19.2px;height:19.2px;border:1.8px solid #3a3a3a;box-sizing:border-box;background:#fff"></div>
<div style="position:absolute;left:1616.1000000000001px;top:543.3000000000001px;width:19.2px;height:19.2px;border:1.8px solid #3a3a3a;box-sizing:border-box;background:#fff"></div>
<div class="t" style="left:1692.2px;top:543.83px;font-size:17px;line-height:19.55px;height:19.55px;font-weight:bold;color:#000;letter-spacing:0.75px;-webkit-text-stroke:0.35px currentColor">GIFT</div>
<div class="t" style="left:1817.5px;top:543.83px;font-size:17px;line-height:19.55px;height:19.55px;font-weight:bold;color:#000;letter-spacing:0.75px;-webkit-text-stroke:0.35px currentColor">21.03.2023 13:42:17</div>
<div style="position:absolute;left:9px;top:538px;width:2130.5px;height:2px;background:#bababa"></div>
<div class="t" style="left:27.0px;top:572.33px;font-size:17px;line-height:19.55px;height:19.55px;font-weight:bold;color:#000;letter-spacing:0.75px;-webkit-text-stroke:0.35px currentColor">271</div>
<div class="t" style="left:84.8px;top:572.33px;font-size:17px;line-height:19.55px;height:19.55px;font-weight:bold;color:#000;letter-spacing:0.75px;-webkit-text-stroke:0.35px currentColor">-50% ТЕСТ</div>
<div class="t" style="left:640.5px;top:572.33px;font-size:17px;line-height:19.55px;height:19.55px;font-weight:bold;color:#000;letter-spacing:0.75px;-webkit-text-stroke:0.35px currentColor">Дисконт</div>
<div class="t" style="left:804.5px;top:572.33px;font-size:17px;line-height:19.55px;height:19.55px;font-weight:bold;color:#000;letter-spacing:0.75px;-webkit-text-stroke:0.35px currentColor">&lt;не опреде...</div>
<div style="position:absolute;left:988.85px;top:571.8000000000001px;width:19.2px;height:19.2px;border:1.8px solid #3a3a3a;box-sizing:border-box;background:#fff"></div>
<div style="position:absolute;left:1159.95px;top:571.8000000000001px;width:19.2px;height:19.2px;border:1.8px solid #3a3a3a;box-sizing:border-box;background:#fff"></div>
<div style="position:absolute;left:1616.1000000000001px;top:571.8000000000001px;width:19.2px;height:19.2px;border:1.8px solid #3a3a3a;box-sizing:border-box;background:#fff"></div>
<div class="t" style="left:1692.2px;top:572.33px;font-size:17px;line-height:19.55px;height:19.55px;font-weight:bold;color:#000;letter-spacing:0.75px;-webkit-text-stroke:0.35px currentColor">GIFT</div>
<div class="t" style="left:1817.5px;top:572.33px;font-size:17px;line-height:19.55px;height:19.55px;font-weight:bold;color:#000;letter-spacing:0.75px;-webkit-text-stroke:0.35px currentColor">07.04.2023 17:31:23</div>
<div style="position:absolute;left:9px;top:567px;width:2130.5px;height:2px;background:#bababa"></div>
<div class="t" style="left:27.0px;top:600.83px;font-size:17px;line-height:19.55px;height:19.55px;font-weight:bold;color:#000;letter-spacing:0.75px;-webkit-text-stroke:0.35px currentColor">273</div>
<div class="t" style="left:84.8px;top:600.83px;font-size:17px;line-height:19.55px;height:19.55px;font-weight:bold;color:#000;letter-spacing:0.75px;-webkit-text-stroke:0.35px currentColor">Для страховых</div>
<div class="t" style="left:640.5px;top:600.83px;font-size:17px;line-height:19.55px;height:19.55px;font-weight:bold;color:#000;letter-spacing:0.75px;-webkit-text-stroke:0.35px currentColor">Дисконт</div>
<div class="t" style="left:804.5px;top:600.83px;font-size:17px;line-height:19.55px;height:19.55px;font-weight:bold;color:#000;letter-spacing:0.75px;-webkit-text-stroke:0.35px currentColor">Платежный ...</div>
<div style="position:absolute;left:988.85px;top:600.3000000000001px;width:19.2px;height:19.2px;border:1.8px solid #3a3a3a;box-sizing:border-box;background:#fff"></div>
<div style="position:absolute;left:1159.95px;top:600.3000000000001px;width:19.2px;height:19.2px;border:1.8px solid #3a3a3a;box-sizing:border-box;background:#fff"></div>
<div style="position:absolute;left:1616.1000000000001px;top:600.3000000000001px;width:19.2px;height:19.2px;border:1.8px solid #3a3a3a;box-sizing:border-box;background:#fff"></div>
<div class="t" style="left:1692.2px;top:600.83px;font-size:17px;line-height:19.55px;height:19.55px;font-weight:bold;color:#000;letter-spacing:0.75px;-webkit-text-stroke:0.35px currentColor">GIFT</div>
<div class="t" style="left:1817.5px;top:600.83px;font-size:17px;line-height:19.55px;height:19.55px;font-weight:bold;color:#000;letter-spacing:0.75px;-webkit-text-stroke:0.35px currentColor">17.04.2023 11:05:35</div>
<div style="position:absolute;left:9px;top:595px;width:2130.5px;height:2px;background:#bababa"></div>
<div class="t" style="left:27.0px;top:629.33px;font-size:17px;line-height:19.55px;height:19.55px;font-weight:bold;color:#000;letter-spacing:0.75px;-webkit-text-stroke:0.35px currentColor">274</div>
<div class="t" style="left:84.8px;top:629.33px;font-size:17px;line-height:19.55px;height:19.55px;font-weight:bold;color:#000;letter-spacing:0.75px;-webkit-text-stroke:0.35px currentColor">скидка_тест</div>
<div class="t" style="left:640.5px;top:629.33px;font-size:17px;line-height:19.55px;height:19.55px;font-weight:bold;color:#000;letter-spacing:0.75px;-webkit-text-stroke:0.35px currentColor">Дисконт</div>
<div class="t" style="left:804.5px;top:629.33px;font-size:17px;line-height:19.55px;height:19.55px;font-weight:bold;color:#000;letter-spacing:0.75px;-webkit-text-stroke:0.35px currentColor">&lt;не опреде...</div>
<div style="position:absolute;left:988.85px;top:628.8000000000001px;width:19.2px;height:19.2px;border:1.8px solid #3a3a3a;box-sizing:border-box;background:#fff"></div>
<div style="position:absolute;left:1159.95px;top:628.8000000000001px;width:19.2px;height:19.2px;border:1.8px solid #3a3a3a;box-sizing:border-box;background:#fff"></div>
<div style="position:absolute;left:1616.1000000000001px;top:628.8000000000001px;width:19.2px;height:19.2px;border:1.8px solid #3a3a3a;box-sizing:border-box;background:#fff"></div>
<div class="t" style="left:1692.2px;top:629.33px;font-size:17px;line-height:19.55px;height:19.55px;font-weight:bold;color:#000;letter-spacing:0.75px;-webkit-text-stroke:0.35px currentColor">GIFT</div>
<div class="t" style="left:1817.5px;top:629.33px;font-size:17px;line-height:19.55px;height:19.55px;font-weight:bold;color:#000;letter-spacing:0.75px;-webkit-text-stroke:0.35px currentColor">10.05.2023 15:32:57</div>
<div style="position:absolute;left:9px;top:623px;width:2130.5px;height:2px;background:#bababa"></div>
<div class="t" style="left:27.0px;top:657.83px;font-size:17px;line-height:19.55px;height:19.55px;font-weight:bold;color:#000;letter-spacing:0.75px;-webkit-text-stroke:0.35px currentColor">275</div>
<div class="t" style="left:84.8px;top:657.83px;font-size:17px;line-height:19.55px;height:19.55px;font-weight:bold;color:#000;letter-spacing:0.75px;-webkit-text-stroke:0.35px currentColor">скидка_тест_с_границами_цен</div>
<div class="t" style="left:640.5px;top:657.83px;font-size:17px;line-height:19.55px;height:19.55px;font-weight:bold;color:#000;letter-spacing:0.75px;-webkit-text-stroke:0.35px currentColor">Дисконт</div>
<div class="t" style="left:804.5px;top:657.83px;font-size:17px;line-height:19.55px;height:19.55px;font-weight:bold;color:#000;letter-spacing:0.75px;-webkit-text-stroke:0.35px currentColor">&lt;не опреде...</div>
<div style="position:absolute;left:988.85px;top:657.3000000000001px;width:19.2px;height:19.2px;border:1.8px solid #3a3a3a;box-sizing:border-box;background:#fff"></div>
<div style="position:absolute;left:1159.95px;top:657.3000000000001px;width:19.2px;height:19.2px;border:1.8px solid #3a3a3a;box-sizing:border-box;background:#fff"></div>
<div style="position:absolute;left:1616.1000000000001px;top:657.3000000000001px;width:19.2px;height:19.2px;border:1.8px solid #3a3a3a;box-sizing:border-box;background:#fff"></div>
<div class="t" style="left:1692.2px;top:657.83px;font-size:17px;line-height:19.55px;height:19.55px;font-weight:bold;color:#000;letter-spacing:0.75px;-webkit-text-stroke:0.35px currentColor">GIFT</div>
<div class="t" style="left:1817.5px;top:657.83px;font-size:17px;line-height:19.55px;height:19.55px;font-weight:bold;color:#000;letter-spacing:0.75px;-webkit-text-stroke:0.35px currentColor">10.05.2023 15:28:41</div>
<div style="position:absolute;left:9px;top:652px;width:2130.5px;height:2px;background:#bababa"></div>
<div class="t" style="left:27.0px;top:686.33px;font-size:17px;line-height:19.55px;height:19.55px;font-weight:bold;color:#000;letter-spacing:0.75px;-webkit-text-stroke:0.35px currentColor">276</div>
<div class="t" style="left:84.8px;top:686.33px;font-size:17px;line-height:19.55px;height:19.55px;font-weight:bold;color:#000;letter-spacing:0.75px;-webkit-text-stroke:0.35px currentColor">1+1=3_тест</div>
<div class="t" style="left:640.5px;top:686.33px;font-size:17px;line-height:19.55px;height:19.55px;font-weight:bold;color:#000;letter-spacing:0.75px;-webkit-text-stroke:0.35px currentColor">Дисконт</div>
<div class="t" style="left:804.5px;top:686.33px;font-size:17px;line-height:19.55px;height:19.55px;font-weight:bold;color:#000;letter-spacing:0.75px;-webkit-text-stroke:0.35px currentColor">&lt;не опреде...</div>
<div style="position:absolute;left:988.85px;top:685.8000000000001px;width:19.2px;height:19.2px;border:1.8px solid #3a3a3a;box-sizing:border-box;background:#fff"></div>
<div style="position:absolute;left:1159.95px;top:685.8000000000001px;width:19.2px;height:19.2px;border:1.8px solid #3a3a3a;box-sizing:border-box;background:#fff"></div>
<div class="t" style="left:1282.1px;top:686.33px;font-size:17px;line-height:19.55px;height:19.55px;font-weight:bold;color:#000;letter-spacing:0.75px;-webkit-text-stroke:0.35px currentColor">01.05.2023</div>
<div class="t" style="left:1424.9px;top:686.33px;font-size:17px;line-height:19.55px;height:19.55px;font-weight:bold;color:#000;letter-spacing:0.75px;-webkit-text-stroke:0.35px currentColor">31.05.2030</div>
<div style="position:absolute;left:1616.1000000000001px;top:685.8000000000001px;width:19.2px;height:19.2px;border:1.8px solid #3a3a3a;box-sizing:border-box;background:#fff"></div>
<div class="t" style="left:1692.2px;top:686.33px;font-size:17px;line-height:19.55px;height:19.55px;font-weight:bold;color:#000;letter-spacing:0.75px;-webkit-text-stroke:0.35px currentColor">GIFT</div>
<div class="t" style="left:1817.5px;top:686.33px;font-size:17px;line-height:19.55px;height:19.55px;font-weight:bold;color:#000;letter-spacing:0.75px;-webkit-text-stroke:0.35px currentColor">23.01.2025 14:30:13</div>
<div style="position:absolute;left:9px;top:681px;width:2130.5px;height:2px;background:#bababa"></div>
<div class="t" style="left:27.0px;top:714.83px;font-size:17px;line-height:19.55px;height:19.55px;font-weight:bold;color:#000;letter-spacing:0.75px;-webkit-text-stroke:0.35px currentColor">277</div>
<div class="t" style="left:84.8px;top:714.83px;font-size:17px;line-height:19.55px;height:19.55px;font-weight:bold;color:#000;letter-spacing:0.75px;-webkit-text-stroke:0.35px currentColor">цитра_тест</div>
<div class="t" style="left:640.5px;top:714.83px;font-size:17px;line-height:19.55px;height:19.55px;font-weight:bold;color:#000;letter-spacing:0.75px;-webkit-text-stroke:0.35px currentColor">Базовый</div>
<div class="t" style="left:804.5px;top:714.83px;font-size:17px;line-height:19.55px;height:19.55px;font-weight:bold;color:#000;letter-spacing:0.75px;-webkit-text-stroke:0.35px currentColor">&lt;не опреде...</div>
<div style="position:absolute;left:988.85px;top:714.3000000000001px;width:19.2px;height:19.2px;border:1.8px solid #3a3a3a;box-sizing:border-box;background:#fff"></div>
<div style="position:absolute;left:1159.95px;top:714.3000000000001px;width:19.2px;height:19.2px;border:1.8px solid #3a3a3a;box-sizing:border-box;background:#fff"></div>
<div class="t" style="left:1282.1px;top:714.83px;font-size:17px;line-height:19.55px;height:19.55px;font-weight:bold;color:#000;letter-spacing:0.75px;-webkit-text-stroke:0.35px currentColor">01.05.2023</div>
<div class="t" style="left:1424.9px;top:714.83px;font-size:17px;line-height:19.55px;height:19.55px;font-weight:bold;color:#000;letter-spacing:0.75px;-webkit-text-stroke:0.35px currentColor">31.05.2023</div>
<div style="position:absolute;left:1616.1000000000001px;top:714.3000000000001px;width:19.2px;height:19.2px;border:1.8px solid #3a3a3a;box-sizing:border-box;background:#fff"></div>
<div class="t" style="left:1692.2px;top:714.83px;font-size:17px;line-height:19.55px;height:19.55px;font-weight:bold;color:#000;letter-spacing:0.75px;-webkit-text-stroke:0.35px currentColor">ADMIN</div>
<div class="t" style="left:1817.5px;top:714.83px;font-size:17px;line-height:19.55px;height:19.55px;font-weight:bold;color:#000;letter-spacing:0.75px;-webkit-text-stroke:0.35px currentColor">01.02.2024 16:28:55</div>
<div style="position:absolute;left:9px;top:709px;width:2130.5px;height:2px;background:#bababa"></div>
<div class="t" style="left:27.0px;top:743.33px;font-size:17px;line-height:19.55px;height:19.55px;font-weight:bold;color:#000;letter-spacing:0.75px;-webkit-text-stroke:0.35px currentColor">279</div>
<div class="t" style="left:84.8px;top:743.33px;font-size:17px;line-height:19.55px;height:19.55px;font-weight:bold;color:#000;letter-spacing:0.75px;-webkit-text-stroke:0.35px currentColor">скидка_тест</div>
<div class="t" style="left:640.5px;top:743.33px;font-size:17px;line-height:19.55px;height:19.55px;font-weight:bold;color:#000;letter-spacing:0.75px;-webkit-text-stroke:0.35px currentColor">Дисконт</div>
<div class="t" style="left:804.5px;top:743.33px;font-size:17px;line-height:19.55px;height:19.55px;font-weight:bold;color:#000;letter-spacing:0.75px;-webkit-text-stroke:0.35px currentColor">&lt;не опреде...</div>
<div style="position:absolute;left:988.85px;top:742.8000000000001px;width:19.2px;height:19.2px;border:1.8px solid #3a3a3a;box-sizing:border-box;background:#fff"></div>
<div style="position:absolute;left:1159.95px;top:742.8000000000001px;width:19.2px;height:19.2px;border:1.8px solid #3a3a3a;box-sizing:border-box;background:#fff"></div>
<div style="position:absolute;left:1616.1000000000001px;top:742.8000000000001px;width:19.2px;height:19.2px;border:1.8px solid #3a3a3a;box-sizing:border-box;background:#fff"></div>
<div class="t" style="left:1692.2px;top:743.33px;font-size:17px;line-height:19.55px;height:19.55px;font-weight:bold;color:#000;letter-spacing:0.75px;-webkit-text-stroke:0.35px currentColor">GIFT</div>
<div class="t" style="left:1817.5px;top:743.33px;font-size:17px;line-height:19.55px;height:19.55px;font-weight:bold;color:#000;letter-spacing:0.75px;-webkit-text-stroke:0.35px currentColor">17.05.2023 17:59:54</div>
<div style="position:absolute;left:9px;top:737px;width:2130.5px;height:2px;background:#bababa"></div>
<div class="t" style="left:27.0px;top:771.83px;font-size:17px;line-height:19.55px;height:19.55px;font-weight:bold;color:#000;letter-spacing:0.75px;-webkit-text-stroke:0.35px currentColor">280</div>
<div class="t" style="left:84.8px;top:771.83px;font-size:17px;line-height:19.55px;height:19.55px;font-weight:bold;color:#000;letter-spacing:0.75px;-webkit-text-stroke:0.35px currentColor">80%</div>
<div class="t" style="left:640.5px;top:771.83px;font-size:17px;line-height:19.55px;height:19.55px;font-weight:bold;color:#000;letter-spacing:0.75px;-webkit-text-stroke:0.35px currentColor">Дисконт</div>
<div class="t" style="left:804.5px;top:771.83px;font-size:17px;line-height:19.55px;height:19.55px;font-weight:bold;color:#000;letter-spacing:0.75px;-webkit-text-stroke:0.35px currentColor">&lt;не опреде...</div>
<div style="position:absolute;left:988.85px;top:771.3000000000001px;width:19.2px;height:19.2px;border:1.8px solid #3a3a3a;box-sizing:border-box;background:#fff"></div>
<div style="position:absolute;left:1159.95px;top:771.3000000000001px;width:19.2px;height:19.2px;border:1.8px solid #3a3a3a;box-sizing:border-box;background:#fff"></div>
<div style="position:absolute;left:1616.1000000000001px;top:771.3000000000001px;width:19.2px;height:19.2px;border:1.8px solid #3a3a3a;box-sizing:border-box;background:#fff"></div>
<div class="t" style="left:1692.2px;top:771.83px;font-size:17px;line-height:19.55px;height:19.55px;font-weight:bold;color:#000;letter-spacing:0.75px;-webkit-text-stroke:0.35px currentColor">GIFT</div>
<div class="t" style="left:1817.5px;top:771.83px;font-size:17px;line-height:19.55px;height:19.55px;font-weight:bold;color:#000;letter-spacing:0.75px;-webkit-text-stroke:0.35px currentColor">29.05.2023 10:37:24</div>
<div style="position:absolute;left:9px;top:766px;width:2130.5px;height:2px;background:#bababa"></div>
<div class="t" style="left:27.0px;top:800.33px;font-size:17px;line-height:19.55px;height:19.55px;font-weight:bold;color:#000;letter-spacing:0.75px;-webkit-text-stroke:0.35px currentColor">281</div>
<div class="t" style="left:84.8px;top:800.33px;font-size:17px;line-height:19.55px;height:19.55px;font-weight:bold;color:#000;letter-spacing:0.75px;-webkit-text-stroke:0.35px currentColor">Скидка на 6 товар</div>
<div class="t" style="left:640.5px;top:800.33px;font-size:17px;line-height:19.55px;height:19.55px;font-weight:bold;color:#000;letter-spacing:0.75px;-webkit-text-stroke:0.35px currentColor">Дисконт</div>
<div class="t" style="left:804.5px;top:800.33px;font-size:17px;line-height:19.55px;height:19.55px;font-weight:bold;color:#000;letter-spacing:0.75px;-webkit-text-stroke:0.35px currentColor">&lt;не опреде...</div>
<div style="position:absolute;left:988.85px;top:799.8000000000001px;width:19.2px;height:19.2px;border:1.8px solid #3a3a3a;box-sizing:border-box;background:#fff"></div>
<div style="position:absolute;left:1159.95px;top:799.8000000000001px;width:19.2px;height:19.2px;border:1.8px solid #3a3a3a;box-sizing:border-box;background:#fff"></div>
<div style="position:absolute;left:1616.1000000000001px;top:799.8000000000001px;width:19.2px;height:19.2px;border:1.8px solid #3a3a3a;box-sizing:border-box;background:#fff"></div>
<div class="t" style="left:1692.2px;top:800.33px;font-size:17px;line-height:19.55px;height:19.55px;font-weight:bold;color:#000;letter-spacing:0.75px;-webkit-text-stroke:0.35px currentColor">GIFT</div>
<div class="t" style="left:1817.5px;top:800.33px;font-size:17px;line-height:19.55px;height:19.55px;font-weight:bold;color:#000;letter-spacing:0.75px;-webkit-text-stroke:0.35px currentColor">15.06.2023 15:31:47</div>
<div style="position:absolute;left:9px;top:795px;width:2130.5px;height:2px;background:#bababa"></div>
<div class="t" style="left:27.0px;top:828.83px;font-size:17px;line-height:19.55px;height:19.55px;font-weight:bold;color:#000;letter-spacing:0.75px;-webkit-text-stroke:0.35px currentColor">282</div>
<div class="t" style="left:84.8px;top:828.83px;font-size:17px;line-height:19.55px;height:19.55px;font-weight:bold;color:#000;letter-spacing:0.75px;-webkit-text-stroke:0.35px currentColor">Скидка -5%</div>
<div class="t" style="left:640.5px;top:828.83px;font-size:17px;line-height:19.55px;height:19.55px;font-weight:bold;color:#000;letter-spacing:0.75px;-webkit-text-stroke:0.35px currentColor">Дисконт</div>
<div class="t" style="left:804.5px;top:828.83px;font-size:17px;line-height:19.55px;height:19.55px;font-weight:bold;color:#000;letter-spacing:0.75px;-webkit-text-stroke:0.35px currentColor">&lt;не опреде...</div>
<div style="position:absolute;left:988.85px;top:828.3000000000001px;width:19.2px;height:19.2px;border:1.8px solid #3a3a3a;box-sizing:border-box;background:#fff"></div>
<div style="position:absolute;left:1159.95px;top:828.3000000000001px;width:19.2px;height:19.2px;border:1.8px solid #3a3a3a;box-sizing:border-box;background:#fff"></div>
<div style="position:absolute;left:1616.1000000000001px;top:828.3000000000001px;width:19.2px;height:19.2px;border:1.8px solid #3a3a3a;box-sizing:border-box;background:#fff"></div>
<div class="t" style="left:1692.2px;top:828.83px;font-size:17px;line-height:19.55px;height:19.55px;font-weight:bold;color:#000;letter-spacing:0.75px;-webkit-text-stroke:0.35px currentColor">GIFT</div>
<div class="t" style="left:1817.5px;top:828.83px;font-size:17px;line-height:19.55px;height:19.55px;font-weight:bold;color:#000;letter-spacing:0.75px;-webkit-text-stroke:0.35px currentColor">13.09.2023 10:56:39</div>
<div style="position:absolute;left:9px;top:823px;width:2130.5px;height:2px;background:#bababa"></div>
<div class="t" style="left:27.0px;top:857.33px;font-size:17px;line-height:19.55px;height:19.55px;font-weight:bold;color:#000;letter-spacing:0.75px;-webkit-text-stroke:0.35px currentColor">283</div>
<div class="t" style="left:84.8px;top:857.33px;font-size:17px;line-height:19.55px;height:19.55px;font-weight:bold;color:#000;letter-spacing:0.75px;-webkit-text-stroke:0.35px currentColor">Скидка -7% by Артур</div>
<div class="t" style="left:640.5px;top:857.33px;font-size:17px;line-height:19.55px;height:19.55px;font-weight:bold;color:#000;letter-spacing:0.75px;-webkit-text-stroke:0.35px currentColor">Дисконт</div>
<div class="t" style="left:804.5px;top:857.33px;font-size:17px;line-height:19.55px;height:19.55px;font-weight:bold;color:#000;letter-spacing:0.75px;-webkit-text-stroke:0.35px currentColor">&lt;не опреде...</div>
<div style="position:absolute;left:988.85px;top:856.8000000000001px;width:19.2px;height:19.2px;border:1.8px solid #3a3a3a;box-sizing:border-box;background:#fff"></div>
<div style="position:absolute;left:1159.95px;top:856.8000000000001px;width:19.2px;height:19.2px;border:1.8px solid #3a3a3a;box-sizing:border-box;background:#fff"></div>
<div style="position:absolute;left:1616.1000000000001px;top:856.8000000000001px;width:19.2px;height:19.2px;border:1.8px solid #3a3a3a;box-sizing:border-box;background:#fff"></div>
<div class="t" style="left:1692.2px;top:857.33px;font-size:17px;line-height:19.55px;height:19.55px;font-weight:bold;color:#000;letter-spacing:0.75px;-webkit-text-stroke:0.35px currentColor">GIFT</div>
<div class="t" style="left:1817.5px;top:857.33px;font-size:17px;line-height:19.55px;height:19.55px;font-weight:bold;color:#000;letter-spacing:0.75px;-webkit-text-stroke:0.35px currentColor">19.09.2023 15:57:56</div>
<div style="position:absolute;left:9px;top:851px;width:2130.5px;height:2px;background:#bababa"></div>
</div>
<div style="position:absolute;left:21px;top:225.5px;width:2px;height:647.5px;background:#bababa"></div>
<div style="position:absolute;left:79px;top:225.5px;width:2px;height:647.5px;background:#bababa"></div>
<div style="position:absolute;left:636px;top:225.5px;width:2px;height:647.5px;background:#bababa"></div>
<div style="position:absolute;left:799px;top:225.5px;width:2px;height:647.5px;background:#bababa"></div>
<div style="position:absolute;left:934px;top:225.5px;width:2px;height:647.5px;background:#bababa"></div>
<div style="position:absolute;left:1061px;top:225.5px;width:2px;height:647.5px;background:#bababa"></div>
<div style="position:absolute;left:1277px;top:225.5px;width:2px;height:647.5px;background:#bababa"></div>
<div style="position:absolute;left:1419px;top:225.5px;width:2px;height:647.5px;background:#bababa"></div>
<div style="position:absolute;left:1562px;top:225.5px;width:2px;height:647.5px;background:#bababa"></div>
<div style="position:absolute;left:1688px;top:225.5px;width:2px;height:647.5px;background:#bababa"></div>
<div style="position:absolute;left:1812px;top:225.5px;width:2px;height:647.5px;background:#bababa"></div>
<div style="position:absolute;left:2011px;top:225.5px;width:2px;height:647.5px;background:#bababa"></div>
<div style="position:absolute;left:2137px;top:225.5px;width:2px;height:647.5px;background:#bababa"></div>
<svg style="position:absolute;left:10.9px;top:233px" width="9" height="15"><path d="M0 0 L8 7 L0 14 Z" fill="#000"/></svg>
<div style="position:absolute;left:9px;top:873px;width:2129.5px;height:2.6px;background:#a8a8a8"></div>
<div style="position:absolute;left:21.5px;top:875.6px;width:1.6px;height:31.4px;background:#b4b4b4"></div>
<div style="position:absolute;left:83.3px;top:877.4px;width:552px;height:27.4px;background:#e4e6e8;border:1px solid #dcdcdc;box-sizing:border-box"></div>
<div class="t" style="left:87px;top:882.33px;font-size:17px;line-height:19.55px;height:19.55px;font-weight:bold;color:#1a1a1a;letter-spacing:0.75px;-webkit-text-stroke:0.35px currentColor">Запис 218 із 256</div>
<div style="position:absolute;left:9px;top:907px;width:2129.5px;height:1.6px;background:#c8c8c8"></div>
<div style="position:absolute;left:30.4px;top:910px;width:1910px;height:21.7px;background:#cdcdcd"></div>
<svg style="position:absolute;left:12px;top:915px" width="10" height="12"><path d="M8 1 L2 6 L8 11" fill="none" stroke="#5a5a5a" stroke-width="2.8"/></svg>
<svg style="position:absolute;left:2122px;top:915px" width="10" height="12"><path d="M2 1 L8 6 L2 11" fill="none" stroke="#5a5a5a" stroke-width="2.8"/></svg>
<div style="position:absolute;left:2141px;top:782.2px;width:22px;height:56.8px;background:#cdcdcd"></div>
<svg style="position:absolute;left:2146px;top:205px" width="13" height="10"><path d="M1 9 L6.5 2.5 L12 9" fill="none" stroke="#5a5a5a" stroke-width="2.8"/></svg>
<svg style="position:absolute;left:2146px;top:891px" width="13" height="10"><path d="M1 1 L6.5 7.5 L12 1" fill="none" stroke="#5a5a5a" stroke-width="2.8"/></svg>
<div style="position:absolute;left:10px;top:946px;width:4px;height:1px;background:#b0b0b0"></div>
<div style="position:absolute;left:10px;top:949px;width:4px;height:1px;background:#b0b0b0"></div>
<div style="position:absolute;left:10px;top:952px;width:4px;height:1px;background:#b0b0b0"></div>
<div style="position:absolute;left:10px;top:955px;width:4px;height:1px;background:#b0b0b0"></div>
<div style="position:absolute;left:10px;top:958px;width:4px;height:1px;background:#b0b0b0"></div>
<div style="position:absolute;left:10px;top:961px;width:4px;height:1px;background:#b0b0b0"></div>
<div style="position:absolute;left:10px;top:964px;width:4px;height:1px;background:#b0b0b0"></div>
<svg style="position:absolute;left:22.8px;top:947.3px" width="22" height="22"><defs><linearGradient id="pg" x1="0" y1="0" x2="0" y2="1"><stop offset="0" stop-color="#a8eaa8"/><stop offset="1" stop-color="#6cc46c"/></linearGradient></defs><path d="M7.6 0.7 H13.8 V7.4 H20.5 V13.6 H13.8 V20.3 H7.6 V13.6 H0.9 V7.4 H7.6 Z" fill="url(#pg)" stroke="#62b862" stroke-width="1.1" stroke-linejoin="round"/></svg>
<div class="t" style="left:51.6px;top:947.91px;font-size:18px;line-height:20.70px;height:20.70px;font-weight:normal;color:#1a1a1a;">Додати</div>
<svg style="position:absolute;left:122.5px;top:945.5px" width="26" height="26"><path d="M1 24 L3 17.5 L18.5 2 L23 6.5 L7.5 22 Z" fill="#f4d45a" stroke="#c8a030" stroke-width="0.9"/><path d="M3.2 18 L18.2 3 L20.2 5 L5.2 20 Z" fill="#fbe89a"/><path d="M17.5 3 L20 0.6 L24.4 5 L22 7.5 Z" fill="#d8d8d8" stroke="#b0b0b0" stroke-width="0.6"/><path d="M20 0.6 L21.3 -0.5 L25.5 3.7 L24.4 5 Z" fill="#f08a8a"/><path d="M1 24 L3 17.5 L7.5 22 Z" fill="#f2c09a"/><path d="M0.6 25 L1.6 21.8 L3.8 24 Z" fill="#555"/></svg>
<div class="t" style="left:153px;top:947.91px;font-size:18px;line-height:20.70px;height:20.70px;font-weight:normal;color:#1a1a1a;">Редагувати</div>
<svg style="position:absolute;left:259px;top:947px" width="23" height="23"><path d="M3 3 L20 20 M20 3 L3 20" stroke="#e87a68" stroke-width="6" stroke-linecap="round"/><path d="M3 3 L20 20 M20 3 L3 20" stroke="#f7a898" stroke-width="3.6" stroke-linecap="round"/></svg>
<div class="t" style="left:288px;top:947.91px;font-size:18px;line-height:20.70px;height:20.70px;font-weight:normal;color:#1a1a1a;">Видалити</div>
<svg style="position:absolute;left:383px;top:950px" width="19" height="18"><rect x="0" y="0.0" width="7.7" height="1.5" fill="#7a7a7a"/><rect x="0" y="3.05" width="7.7" height="1.5" fill="#7a7a7a"/><rect x="0" y="6.1" width="7.7" height="1.5" fill="#7a7a7a"/><rect x="0" y="9.149999999999999" width="7.7" height="1.5" fill="#7a7a7a"/><rect x="0" y="12.2" width="7.7" height="1.5" fill="#7a7a7a"/><rect x="0" y="15.25" width="7.7" height="1.5" fill="#7a7a7a"/><rect x="10.7" y="0.0" width="7.7" height="1.5" fill="#7a7a7a"/><rect x="10.7" y="3.05" width="7.7" height="1.5" fill="#7a7a7a"/><rect x="10.7" y="6.1" width="7.7" height="1.5" fill="#7a7a7a"/><rect x="10.7" y="9.149999999999999" width="7.7" height="1.5" fill="#7a7a7a"/><rect x="10.7" y="12.2" width="7.7" height="1.5" fill="#7a7a7a"/><rect x="10.7" y="15.25" width="7.7" height="1.5" fill="#7a7a7a"/></svg>
<svg style="position:absolute;left:2037px;top:947px" width="23" height="23"><path d="M11 3.2 A7.6 7.6 0 0 0 5.6 16.2" fill="none" stroke="#a9d6f5" stroke-width="5.6"/><path d="M1 0.5 H11.5 V9 Z" fill="#9fd0f3"/><path d="M11 18.8 A7.6 7.6 0 0 0 16.4 5.8" fill="none" stroke="#62baf0" stroke-width="5.6"/><path d="M21 21.5 H10.5 V13 Z" fill="#55b0ec"/></svg>
<div class="t" style="left:2066px;top:947.91px;font-size:18px;line-height:20.70px;height:20.70px;font-weight:normal;color:#1a1a1a;">Оновити</div>
<svg style="position:absolute;left:2148px;top:963.0px" width="10" height="6"><path d="M0 0 H8.5 L4.25 4.5 Z" fill="#111"/></svg>
<div style="position:absolute;left:9px;top:977.4px;width:118px;height:31px;background:#fff;border:1px solid #e6e6e6;border-bottom:none;box-sizing:border-box"></div>
<div class="t" style="left:16px;top:983.96px;font-size:16px;line-height:18.40px;height:18.40px;font-weight:normal;color:#1a1a40;letter-spacing:0.4px">Цінова група</div>
<div style="position:absolute;left:127px;top:981px;width:243px;height:27.5px;background:#f0f0f0;border:1px solid #d9d9d9;border-bottom:none;box-sizing:border-box"></div>
<div class="t" style="left:133px;top:986.26px;font-size:16px;line-height:18.40px;height:18.40px;font-weight:normal;color:#1a1a40;letter-spacing:0.4px">По постачальнику/виробнику</div>
<div style="position:absolute;left:369px;top:981px;width:123.5px;height:27.5px;background:#f0f0f0;border:1px solid #d9d9d9;border-bottom:none;box-sizing:border-box"></div>
<div class="t" style="left:378px;top:986.26px;font-size:16px;line-height:18.40px;height:18.40px;font-weight:normal;color:#1a1a40;letter-spacing:0.4px">Фіксовані ціни</div>
<div style="position:absolute;left:491.5px;top:981px;width:141.89999999999998px;height:27.5px;background:#f0f0f0;border:1px solid #d9d9d9;border-bottom:none;box-sizing:border-box"></div>
<div class="t" style="left:500.5px;top:986.26px;font-size:16px;line-height:18.40px;height:18.40px;font-weight:normal;color:#1a1a40;letter-spacing:0.4px">За документами</div>
<div style="position:absolute;left:632.4px;top:981px;width:78.89999999999998px;height:27.5px;background:#f0f0f0;border:1px solid #d9d9d9;border-bottom:none;box-sizing:border-box"></div>
<div class="t" style="left:641.4px;top:986.26px;font-size:16px;line-height:18.40px;height:18.40px;font-weight:normal;color:#1a1a40;letter-spacing:0.4px">Розклад</div>
<div style="position:absolute;left:127px;top:1007.5px;width:2006px;height:1px;background:#dadada"></div>
<div style="position:absolute;left:9px;top:1008.3px;width:2155px;height:294px;background:#f0f0f0"></div>
<div style="position:absolute;left:11px;top:1008.3px;width:2122.4px;height:32.700000000000045px;background:#fff"></div>
<div style="position:absolute;left:28px;top:1041px;width:2105.4px;height:202.5px;background:#fff"></div>
<div style="position:absolute;left:11px;top:1041px;width:17px;height:202.5px;background:#f0f0f0"></div>
<div style="position:absolute;left:28px;top:1098.0px;width:2105.4px;height:28.5px;background:#efefef"></div>
<div style="position:absolute;left:28px;top:1013px;width:1.2px;height:28px;background:#e3e3e3"></div>
<div style="position:absolute;left:88px;top:1013px;width:1.2px;height:28px;background:#e3e3e3"></div>
<div style="position:absolute;left:776.8px;top:1013px;width:1.2px;height:28px;background:#e3e3e3"></div>
<div style="position:absolute;left:931.5px;top:1013px;width:1.2px;height:28px;background:#e3e3e3"></div>
<div style="position:absolute;left:1057.3px;top:1013px;width:1.2px;height:28px;background:#e3e3e3"></div>
<div style="position:absolute;left:1202.6px;top:1013px;width:1.2px;height:28px;background:#e3e3e3"></div>
<div style="position:absolute;left:1361.7px;top:1013px;width:1.2px;height:28px;background:#e3e3e3"></div>
<div style="position:absolute;left:1487px;top:1013px;width:1.2px;height:28px;background:#e3e3e3"></div>
<div style="position:absolute;left:1613.3px;top:1013px;width:1.2px;height:28px;background:#e3e3e3"></div>
<div style="position:absolute;left:1739.5px;top:1013px;width:1.2px;height:28px;background:#e3e3e3"></div>
<div style="position:absolute;left:1865.7px;top:1013px;width:1.2px;height:28px;background:#e3e3e3"></div>
<div class="t" style="left:-342.0px;width:800px;text-align:center;top:1019.76px;font-size:16px;line-height:18.40px;font-weight:normal;color:#1a1a1a;">ІД</div>
<div class="t" style="left:18px;width:800px;text-align:center;top:1019.76px;font-size:16px;line-height:18.40px;font-weight:normal;color:#1a1a1a;">Цінова група</div>
<div class="t" style="left:454.15px;width:800px;text-align:center;top:1019.76px;font-size:16px;line-height:18.40px;font-weight:normal;color:#1a1a1a;">Відсоток</div>
<div class="t" style="left:594.4px;width:800px;text-align:center;top:1019.76px;font-size:16px;line-height:18.40px;font-weight:normal;color:#1a1a1a;">Дельта</div>
<div class="t" style="left:729.9499999999998px;width:800px;text-align:center;top:1019.76px;font-size:16px;line-height:18.40px;font-weight:normal;color:#1a1a1a;">Не використов...</div>
<div class="t" style="left:882.1500000000001px;width:800px;text-align:center;top:1019.76px;font-size:16px;line-height:18.40px;font-weight:normal;color:#1a1a1a;">Базова ціна</div>
<div class="t" style="left:1368.7px;top:1019.76px;font-size:16px;line-height:18.40px;height:18.40px;font-weight:normal;color:#1a1a1a;">1 до суми</div>
<div class="t" style="left:1494px;top:1019.76px;font-size:16px;line-height:18.40px;height:18.40px;font-weight:normal;color:#1a1a1a;">1 відсоток</div>
<div class="t" style="left:1620.3px;top:1019.76px;font-size:16px;line-height:18.40px;height:18.40px;font-weight:normal;color:#1a1a1a;">2 до суми</div>
<div class="t" style="left:1746.5px;top:1019.76px;font-size:16px;line-height:18.40px;height:18.40px;font-weight:normal;color:#1a1a1a;">2 відсоток</div>
<div class="t" style="left:1615px;width:800px;text-align:center;top:1019.76px;font-size:16px;line-height:18.40px;font-weight:normal;color:#1a1a1a;">Дооцінювати до макс.</div>
<svg style="position:absolute;left:15.5px;top:1020.5px" width="10" height="15"><rect x="0" y="0.0" width="1.6" height="1.6" fill="#222"/><rect x="3" y="0.0" width="6.5" height="1.8" fill="#222"/><rect x="0" y="2.9" width="1.6" height="1.6" fill="#222"/><rect x="3" y="2.9" width="6.5" height="1.8" fill="#222"/><rect x="0" y="5.8" width="1.6" height="1.6" fill="#222"/><rect x="3" y="5.8" width="6.5" height="1.8" fill="#222"/><rect x="0" y="8.7" width="1.6" height="1.6" fill="#222"/><rect x="3" y="8.7" width="6.5" height="1.8" fill="#222"/><rect x="0" y="11.6" width="1.6" height="1.6" fill="#222"/><rect x="3" y="11.6" width="6.5" height="1.8" fill="#222"/></svg>
<svg style="position:absolute;left:756px;top:1021px" width="12" height="13"><path d="M5.5 1 L10.5 11.5 H0.8 Z" fill="#fff" stroke="#999" stroke-width="1.1"/></svg>
<div class="t" style="left:31.5px;top:1047.33px;font-size:17px;line-height:19.55px;height:19.55px;font-weight:bold;color:#000;letter-spacing:0.75px;-webkit-text-stroke:0.35px currentColor">3390</div>
<div class="t" style="left:90.5px;top:1047.33px;font-size:17px;line-height:19.55px;height:19.55px;font-weight:bold;color:#000;letter-spacing:0.75px;-webkit-text-stroke:0.35px currentColor">!Стандарт</div>
<div class="t" style="left:779.8px;top:1047.33px;font-size:17px;line-height:19.55px;height:19.55px;font-weight:bold;color:#000;letter-spacing:0.75px;-webkit-text-stroke:0.35px currentColor">0,000</div>
<div class="t" style="left:934.5px;top:1047.33px;font-size:17px;line-height:19.55px;height:19.55px;font-weight:bold;color:#000;letter-spacing:0.75px;-webkit-text-stroke:0.35px currentColor">0,000</div>
<div style="position:absolute;left:1120.35px;top:1045.3px;width:19.2px;height:19.2px;border:1.8px solid #3a3a3a;box-sizing:border-box;background:#fff"></div>
<div class="t" style="left:1205.6px;top:1047.33px;font-size:17px;line-height:19.55px;height:19.55px;font-weight:bold;color:#000;letter-spacing:0.75px;-webkit-text-stroke:0.35px currentColor">Розничная</div>
<div style="position:absolute;left:2006.4px;top:1045.3px;width:19.2px;height:19.2px;border:1.8px solid #3a3a3a;box-sizing:border-box;background:#fff"></div>
<div class="t" style="left:31.5px;top:1075.83px;font-size:17px;line-height:19.55px;height:19.55px;font-weight:bold;color:#000;letter-spacing:0.75px;-webkit-text-stroke:0.35px currentColor">3391</div>
<div class="t" style="left:90.5px;top:1075.83px;font-size:17px;line-height:19.55px;height:19.55px;font-weight:bold;color:#000;letter-spacing:0.75px;-webkit-text-stroke:0.35px currentColor">&lt;не определено&gt;</div>
<div class="t" style="left:779.8px;top:1075.83px;font-size:17px;line-height:19.55px;height:19.55px;font-weight:bold;color:#000;letter-spacing:0.75px;-webkit-text-stroke:0.35px currentColor">0,000</div>
<div class="t" style="left:934.5px;top:1075.83px;font-size:17px;line-height:19.55px;height:19.55px;font-weight:bold;color:#000;letter-spacing:0.75px;-webkit-text-stroke:0.35px currentColor">0,000</div>
<div style="position:absolute;left:1120.35px;top:1073.8px;width:19.2px;height:19.2px;border:1.8px solid #3a3a3a;box-sizing:border-box;background:#fff"></div>
<div class="t" style="left:1205.6px;top:1075.83px;font-size:17px;line-height:19.55px;height:19.55px;font-weight:bold;color:#000;letter-spacing:0.75px;-webkit-text-stroke:0.35px currentColor">Розничная</div>
<div style="position:absolute;left:2006.4px;top:1073.8px;width:19.2px;height:19.2px;border:1.8px solid #3a3a3a;box-sizing:border-box;background:#fff"></div>
<div style="position:absolute;left:11px;top:1069px;width:2122.4px;height:2px;background:#bababa"></div>
<div class="t" style="left:31.5px;top:1104.33px;font-size:17px;line-height:19.55px;height:19.55px;font-weight:bold;color:#000;letter-spacing:0.75px;-webkit-text-stroke:0.35px currentColor">3387</div>
<div class="t" style="left:90.5px;top:1104.33px;font-size:17px;line-height:19.55px;height:19.55px;font-weight:bold;color:#000;letter-spacing:0.75px;-webkit-text-stroke:0.35px currentColor">Акции</div>
<div class="t" style="left:779.8px;top:1104.33px;font-size:17px;line-height:19.55px;height:19.55px;font-weight:bold;color:#000;letter-spacing:0.75px;-webkit-text-stroke:0.35px currentColor">0,000</div>
<div class="t" style="left:934.5px;top:1104.33px;font-size:17px;line-height:19.55px;height:19.55px;font-weight:bold;color:#000;letter-spacing:0.75px;-webkit-text-stroke:0.35px currentColor">0,000</div>
<div style="position:absolute;left:1120.35px;top:1102.3px;width:19.2px;height:19.2px;border:1.8px solid #3a3a3a;box-sizing:border-box;background:#fff"></div>
<div class="t" style="left:1205.6px;top:1104.33px;font-size:17px;line-height:19.55px;height:19.55px;font-weight:bold;color:#000;letter-spacing:0.75px;-webkit-text-stroke:0.35px currentColor">Розничная</div>
<div style="position:absolute;left:2006.4px;top:1102.3px;width:19.2px;height:19.2px;border:1.8px solid #3a3a3a;box-sizing:border-box;background:#fff"></div>
<div style="position:absolute;left:11px;top:1097px;width:2122.4px;height:2px;background:#bababa"></div>
<div class="t" style="left:31.5px;top:1132.83px;font-size:17px;line-height:19.55px;height:19.55px;font-weight:bold;color:#000;letter-spacing:0.75px;-webkit-text-stroke:0.35px currentColor">3396</div>
<div class="t" style="left:90.5px;top:1132.83px;font-size:17px;line-height:19.55px;height:19.55px;font-weight:bold;color:#000;letter-spacing:0.75px;-webkit-text-stroke:0.35px currentColor">Биологически активные вещества</div>
<div class="t" style="left:779.8px;top:1132.83px;font-size:17px;line-height:19.55px;height:19.55px;font-weight:bold;color:#000;letter-spacing:0.75px;-webkit-text-stroke:0.35px currentColor">0,000</div>
<div class="t" style="left:934.5px;top:1132.83px;font-size:17px;line-height:19.55px;height:19.55px;font-weight:bold;color:#000;letter-spacing:0.75px;-webkit-text-stroke:0.35px currentColor">0,000</div>
<div style="position:absolute;left:1120.35px;top:1130.8px;width:19.2px;height:19.2px;border:1.8px solid #3a3a3a;box-sizing:border-box;background:#fff"></div>
<div class="t" style="left:1205.6px;top:1132.83px;font-size:17px;line-height:19.55px;height:19.55px;font-weight:bold;color:#000;letter-spacing:0.75px;-webkit-text-stroke:0.35px currentColor">Розничная</div>
<div style="position:absolute;left:2006.4px;top:1130.8px;width:19.2px;height:19.2px;border:1.8px solid #3a3a3a;box-sizing:border-box;background:#fff"></div>
<div style="position:absolute;left:11px;top:1125px;width:2122.4px;height:2px;background:#bababa"></div>
<div class="t" style="left:31.5px;top:1161.33px;font-size:17px;line-height:19.55px;height:19.55px;font-weight:bold;color:#000;letter-spacing:0.75px;-webkit-text-stroke:0.35px currentColor">3394</div>
<div class="t" style="left:90.5px;top:1161.33px;font-size:17px;line-height:19.55px;height:19.55px;font-weight:bold;color:#000;letter-spacing:0.75px;-webkit-text-stroke:0.35px currentColor">Гос.регулирование (Нац. перечень)</div>
<div class="t" style="left:779.8px;top:1161.33px;font-size:17px;line-height:19.55px;height:19.55px;font-weight:bold;color:#000;letter-spacing:0.75px;-webkit-text-stroke:0.35px currentColor">0,000</div>
<div class="t" style="left:934.5px;top:1161.33px;font-size:17px;line-height:19.55px;height:19.55px;font-weight:bold;color:#000;letter-spacing:0.75px;-webkit-text-stroke:0.35px currentColor">0,000</div>
<div style="position:absolute;left:1120.35px;top:1159.3px;width:19.2px;height:19.2px;border:1.8px solid #3a3a3a;box-sizing:border-box;background:#fff"></div>
<div class="t" style="left:1205.6px;top:1161.33px;font-size:17px;line-height:19.55px;height:19.55px;font-weight:bold;color:#000;letter-spacing:0.75px;-webkit-text-stroke:0.35px currentColor">Розничная</div>
<div style="position:absolute;left:2006.4px;top:1159.3px;width:19.2px;height:19.2px;border:1.8px solid #3a3a3a;box-sizing:border-box;background:#fff"></div>
<div style="position:absolute;left:11px;top:1154px;width:2122.4px;height:2px;background:#bababa"></div>
<div class="t" style="left:31.5px;top:1189.83px;font-size:17px;line-height:19.55px;height:19.55px;font-weight:bold;color:#000;letter-spacing:0.75px;-webkit-text-stroke:0.35px currentColor">3393</div>
<div class="t" style="left:90.5px;top:1189.83px;font-size:17px;line-height:19.55px;height:19.55px;font-weight:bold;color:#000;letter-spacing:0.75px;-webkit-text-stroke:0.35px currentColor">Гос.регулирование 15%</div>
<div class="t" style="left:779.8px;top:1189.83px;font-size:17px;line-height:19.55px;height:19.55px;font-weight:bold;color:#000;letter-spacing:0.75px;-webkit-text-stroke:0.35px currentColor">0,000</div>
<div class="t" style="left:934.5px;top:1189.83px;font-size:17px;line-height:19.55px;height:19.55px;font-weight:bold;color:#000;letter-spacing:0.75px;-webkit-text-stroke:0.35px currentColor">0,000</div>
<div style="position:absolute;left:1120.35px;top:1187.8px;width:19.2px;height:19.2px;border:1.8px solid #3c8ad8;box-sizing:border-box;background:#fff"></div>
<div class="t" style="left:1205.6px;top:1189.83px;font-size:17px;line-height:19.55px;height:19.55px;font-weight:bold;color:#000;letter-spacing:0.75px;-webkit-text-stroke:0.35px currentColor">Розничная</div>
<div style="position:absolute;left:2006.4px;top:1187.8px;width:19.2px;height:19.2px;border:1.8px solid #3a3a3a;box-sizing:border-box;background:#fff"></div>
<div style="position:absolute;left:11px;top:1183px;width:2122.4px;height:2px;background:#bababa"></div>
<div class="t" style="left:31.5px;top:1218.33px;font-size:17px;line-height:19.55px;height:19.55px;font-weight:bold;color:#000;letter-spacing:0.75px;-webkit-text-stroke:0.35px currentColor">3397</div>
<div class="t" style="left:90.5px;top:1218.33px;font-size:17px;line-height:19.55px;height:19.55px;font-weight:bold;color:#000;letter-spacing:0.75px;-webkit-text-stroke:0.35px currentColor">Дезинфицирующие средства</div>
<div class="t" style="left:779.8px;top:1218.33px;font-size:17px;line-height:19.55px;height:19.55px;font-weight:bold;color:#000;letter-spacing:0.75px;-webkit-text-stroke:0.35px currentColor">0,000</div>
<div class="t" style="left:934.5px;top:1218.33px;font-size:17px;line-height:19.55px;height:19.55px;font-weight:bold;color:#000;letter-spacing:0.75px;-webkit-text-stroke:0.35px currentColor">0,000</div>
<div style="position:absolute;left:1120.35px;top:1216.3px;width:19.2px;height:19.2px;border:1.8px solid #3a3a3a;box-sizing:border-box;background:#fff"></div>
<div class="t" style="left:1205.6px;top:1218.33px;font-size:17px;line-height:19.55px;height:19.55px;font-weight:bold;color:#000;letter-spacing:0.75px;-webkit-text-stroke:0.35px currentColor">Розничная</div>
<div style="position:absolute;left:2006.4px;top:1216.3px;width:19.2px;height:19.2px;border:1.8px solid #3a3a3a;box-sizing:border-box;background:#fff"></div>
<div style="position:absolute;left:11px;top:1211px;width:2122.4px;height:2px;background:#bababa"></div>
<div style="position:absolute;left:27px;top:1041px;width:2px;height:202.5px;background:#bababa"></div>
<div style="position:absolute;left:87px;top:1041px;width:2px;height:202.5px;background:#bababa"></div>
<div style="position:absolute;left:776px;top:1041px;width:2px;height:202.5px;background:#bababa"></div>
<div style="position:absolute;left:931px;top:1041px;width:2px;height:202.5px;background:#bababa"></div>
<div style="position:absolute;left:1056px;top:1041px;width:2px;height:202.5px;background:#bababa"></div>
<div style="position:absolute;left:1202px;top:1041px;width:2px;height:202.5px;background:#bababa"></div>
<div style="position:absolute;left:1361px;top:1041px;width:2px;height:202.5px;background:#bababa"></div>
<div style="position:absolute;left:1486px;top:1041px;width:2px;height:202.5px;background:#bababa"></div>
<div style="position:absolute;left:1612px;top:1041px;width:2px;height:202.5px;background:#bababa"></div>
<div style="position:absolute;left:1739px;top:1041px;width:2px;height:202.5px;background:#bababa"></div>
<div style="position:absolute;left:1865px;top:1041px;width:2px;height:202.5px;background:#bababa"></div>
<div style="position:absolute;left:2132px;top:1041px;width:2px;height:202.5px;background:#bababa"></div>
<svg style="position:absolute;left:16.6px;top:1105.5px" width="9" height="15"><path d="M0 0 L8 7 L0 14 Z" fill="#000"/></svg>
<div style="position:absolute;left:11px;top:1240px;width:2122.4px;height:1.5px;background:#bababa"></div>
<div style="position:absolute;left:11px;top:1243.5px;width:2122.4px;height:2.6px;background:#a8a8a8"></div>
<div style="position:absolute;left:27px;top:1246px;width:1.6px;height:31px;background:#b4b4b4"></div>
<div style="position:absolute;left:91px;top:1247.5px;width:684px;height:27.4px;background:#e4e6e8;border:1px solid #dcdcdc;box-sizing:border-box"></div>
<div class="t" style="left:95px;top:1252.83px;font-size:17px;line-height:19.55px;height:19.55px;font-weight:bold;color:#1a1a1a;letter-spacing:0.75px;-webkit-text-stroke:0.35px currentColor">Запис 3 із 16</div>
<div style="position:absolute;left:11px;top:1277px;width:2122.4px;height:1.6px;background:#c8c8c8"></div>
<div style="position:absolute;left:36px;top:1281px;width:1866px;height:21px;background:#cdcdcd"></div>
<svg style="position:absolute;left:18px;top:1286px" width="10" height="12"><path d="M8 1 L2 6 L8 11" fill="none" stroke="#5a5a5a" stroke-width="2.8"/></svg>
<svg style="position:absolute;left:2116px;top:1286px" width="10" height="12"><path d="M2 1 L8 6 L2 11" fill="none" stroke="#5a5a5a" stroke-width="2.8"/></svg>
<div style="position:absolute;left:2135px;top:1039px;width:22px;height:94px;background:#cdcdcd"></div>
<svg style="position:absolute;left:2140px;top:1022px" width="13" height="10"><path d="M1 9 L6.5 2.5 L12 9" fill="none" stroke="#5a5a5a" stroke-width="2.8"/></svg>
<svg style="position:absolute;left:2140px;top:1261px" width="13" height="10"><path d="M1 1 L6.5 7.5 L12 1" fill="none" stroke="#5a5a5a" stroke-width="2.8"/></svg>
<div style="position:absolute;left:0px;top:0px;width:5px;height:1380px;background:#000"></div>
<div style="position:absolute;left:2164px;top:0px;width:8px;height:1380px;background:#000"></div>
<div style="position:absolute;left:5px;top:196px;width:2163px;height:1110.5px;border:4.2px solid #ff0000;box-sizing:border-box"></div>
<div style="position:absolute;left:5px;top:120px;width:2160px;height:72px;border:4px solid #ff0000;box-sizing:border-box"></div>
<div style="position:absolute;left:9.7px;top:1313.5px;width:187px;height:34.2px;background:#f0f0f0;border:2px solid #2a2a2a;box-sizing:border-box"></div>
<div class="t" style="left:14px;top:1320.66px;font-size:16px;line-height:18.40px;height:18.40px;font-weight:normal;color:#1a1a1a;">Головна</div>
<div style="position:absolute;left:199.8px;top:1313.5px;width:187px;height:34.2px;background:#ffd0a0;border:2px solid #3c8ad8;box-sizing:border-box"></div>
<div class="t" style="left:203px;top:1320.66px;font-size:16px;line-height:18.40px;height:18.40px;font-weight:normal;color:#1a1a1a;">Націнки</div>
<div style="position:absolute;left:5px;top:1351px;width:2159px;height:1.2px;background:#d8d8d8"></div>
<svg style="position:absolute;left:9px;top:1357px" width="20" height="21"><defs><linearGradient id="dbt" x1="0" y1="0" x2="1" y2="1"><stop offset="0" stop-color="#e8e4ff"/><stop offset="1" stop-color="#a8a0c8"/></linearGradient><linearGradient id="dbb" x1="0" y1="0" x2="1" y2="0"><stop offset="0" stop-color="#b0a8e0"/><stop offset="1" stop-color="#6a60a8"/></linearGradient></defs><path d="M1.5 1.5 Q10 0.5 18.5 2 V17.5 Q10 20.5 2 19.5 Z" fill="url(#dbb)"/><path d="M1.5 1.5 Q10 0.5 18.5 2 V6 H1.5 Z" fill="url(#dbt)"/><rect x="1.5" y="6" width="17" height="11" fill="#3a8ee0"/><path d="M2 9 H18.5 M2 12 H18.5 M2 15 H18.5" stroke="#a8c8f0" stroke-width="0.9"/></svg>
<div class="t" style="left:36px;top:1357.63px;font-size:17px;line-height:19.55px;height:19.55px;font-weight:normal;color:#1a1a1a;letter-spacing:-0.3px">База даних: TASA3@TITAN</div>
<div style="position:absolute;left:302.5px;top:1354px;width:1.2px;height:26px;background:#d8d8d8"></div>
<svg style="position:absolute;left:309px;top:1356px" width="17" height="22"><circle cx="7.5" cy="6.5" r="5.5" fill="#e83a10"/><circle cx="9.5" cy="8" r="4.6" fill="#9a9ee0"/><ellipse cx="9.5" cy="7" rx="3" ry="2.5" fill="#c8d0f4"/><path d="M6 12 L13 12 L9.5 15 Z" fill="#e8a050"/><path d="M0.8 21.5 Q0.8 13.5 8 13.5 Q15.8 13.5 15.8 21.5 Z" fill="#a8a8e8"/><ellipse cx="8.3" cy="17.5" rx="4" ry="2.5" fill="#dcdcf8"/></svg>
<div class="t" style="left:333px;top:1357.63px;font-size:17px;line-height:19.55px;height:19.55px;font-weight:normal;color:#1a1a1a;letter-spacing:-0.3px">Користувач: GIFT</div>
<div style="position:absolute;left:608.5px;top:1354px;width:1.2px;height:26px;background:#d8d8d8"></div>
<svg style="position:absolute;left:612px;top:1356px" width="21" height="22"><path d="M2 9 Q3 3 8 3 L15 3 L19 8 L20 18 Q14 19 8 18 L1 17 Z" fill="#8a88d8"/><path d="M4 4.5 Q8 2.5 14 3.5 L17 8 Q10 9 3 8 Z" fill="#b8b4ec"/><path d="M12 0.5 L16 5" stroke="#333" stroke-width="0.8"/><path d="M3.5 12 L6 12 L3.5 21 L1.5 21 Z" fill="#f0c020" stroke="#333" stroke-width="0.6"/><path d="M11.5 14 L14 14 L11.5 21.5 L9.5 21.5 Z" fill="#f0c020" stroke="#333" stroke-width="0.6"/></svg>
<div class="t" style="left:640px;top:1357.63px;font-size:17px;line-height:19.55px;height:19.55px;font-weight:normal;color:#1a1a1a;">1</div>
<div style="position:absolute;left:667px;top:1354px;width:1.2px;height:26px;background:#d8d8d8"></div>
<div class="t" style="left:671px;top:1357.63px;font-size:17px;line-height:19.55px;height:19.55px;font-weight:normal;color:#1a1a1a;letter-spacing:-0.3px">Кассовый аппарат не подключен</div>
<div style="position:absolute;left:1124px;top:1354px;width:1px;height:26px;background:#d0d0d0"></div>
<div class="t" style="left:1128px;top:1357.63px;font-size:17px;line-height:19.55px;height:19.55px;font-weight:normal;color:#1a1a1a;letter-spacing:-0.3px">Зона: Склад [1]</div>
<svg style="position:absolute;left:0;top:0" width="2172" height="260">
<defs><filter id="sh" x="-20%" y="-20%" width="140%" height="140%"><feDropShadow dx="1" dy="1.5" stdDeviation="0.8" flood-color="#000" flood-opacity="0.55"/></filter></defs>
<g filter="url(#sh)">
<path d="M1435.1 43.1 L1325.6 112.9 L1324.2 105.7 L1315.3 122.7 L1333.8 119.7 L1328.4 117.1 L1435.7 44.1 Z" fill="#ff0000"/>
<path d="M1540.4 44.9 L1312.6 185.3 L1311.7 178.6 L1302 194.8 L1320.5 194.1 L1315.2 189.5 L1541.0 45.9 Z" fill="#ff0000"/>
</g>
<g font-family="Liberation Sans" font-weight="bold" font-size="40" fill="#ff0000" stroke="#fff" stroke-width="4" paint-order="stroke" filter="url(#sh)">
<text x="1437" y="49">1</text><text x="1551" y="50.5">2</text>
</g>
</svg>
</body></html>
